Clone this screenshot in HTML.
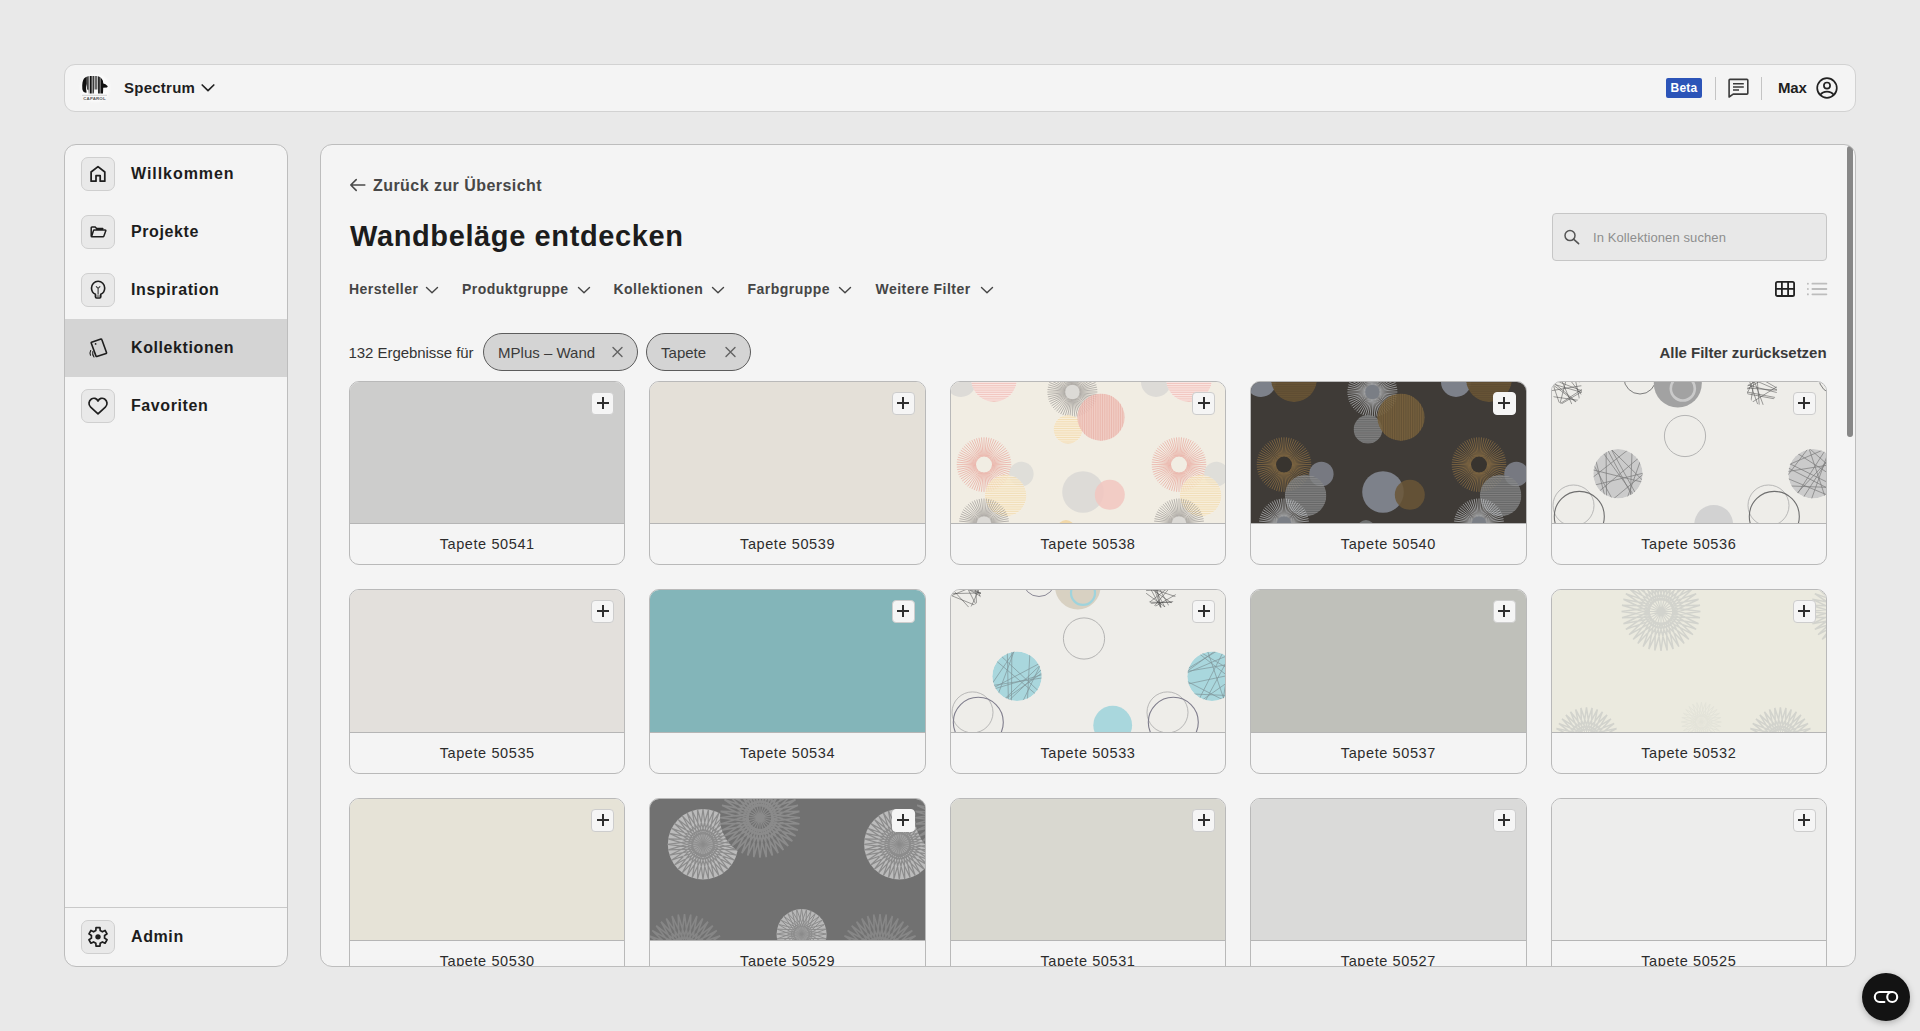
<!DOCTYPE html>
<html><head><meta charset="utf-8">
<style>
*{box-sizing:border-box;margin:0;padding:0}
html,body{width:1920px;height:1031px;overflow:hidden;background:#e9e9e9;font-family:"Liberation Sans",sans-serif;color:#1e1e1e}
.abs{position:absolute}
#hdr{position:absolute;left:64px;top:64px;width:1792px;height:48px;background:#f4f4f4;border:1.5px solid #d2d2d2;border-radius:11px}
#side{position:absolute;left:64px;top:144px;width:224px;height:823px;background:#f4f4f4;border:1px solid #bdbdbd;border-radius:12px;overflow:hidden}
#main{position:absolute;left:320px;top:144px;width:1536px;height:823px;background:#f4f4f4;border:1px solid #bdbdbd;border-radius:12px;overflow:hidden}
.nav{position:absolute;left:0;width:222px;height:58px}
.nav.act{background:#d4d4d4}
.ibox{position:absolute;left:16px;top:12px;width:34px;height:34px;border:1px solid #cfcfcf;background:#e9e9e9;border-radius:7px}
.nav.act .ibox{border-color:transparent;background:transparent}
.ibox svg{position:absolute;left:0;top:0}
.nlab{position:absolute;left:66px;top:19px;font-size:16px;font-weight:bold;color:#1c1c1c;white-space:nowrap;line-height:20px;letter-spacing:0.6px}
.card{position:absolute;width:276.4px;height:184.6px;border:1px solid #b9b9b9;border-radius:10px;overflow:hidden;background:#f4f4f4}
.card .img{position:absolute;left:0;top:0;right:0;height:142.5px;border-bottom:1px solid #b5b5b5;overflow:hidden}
.card .img svg{position:absolute;left:0;top:0}
.card .lab{position:absolute;left:0;right:0;top:153.4px;text-align:center;font-size:14.5px;color:#2c2c2c;line-height:18px;letter-spacing:0.6px}
.plus{position:absolute;right:10px;top:10px;width:23px;height:23px;background:#f5f5f5;border:1px solid #cdcdcd;border-radius:4px}
.plus:before{content:"";position:absolute;left:4.5px;top:9px;width:12px;height:2px;background:#2e2e2e}
.plus:after{content:"";position:absolute;left:9.5px;top:4px;width:2px;height:12px;background:#2e2e2e}
.flt{position:absolute;top:280px;font-size:14px;font-weight:bold;color:#454545;white-space:nowrap;line-height:18px}
.chip{position:absolute;top:333px;height:38px;border:1px solid #5a5a5a;border-radius:19px;background:#d4d4d4;font-size:15px;color:#3a3a3a;line-height:36px;white-space:nowrap}
</style></head><body>

<!-- HEADER -->
<div id="hdr"></div>
<!-- logo -->
<svg class="abs" style="left:78px;top:72px" width="34" height="32" viewBox="0 0 34 32">
 <defs><filter id="lb" x="-20%" y="-20%" width="140%" height="140%"><feGaussianBlur stdDeviation="1"/></filter>
 <clipPath id="eleph"><path d="M6 6.5 C7.5 4.8 9.5 4 12 3.9 L19 4 C21.5 4.3 23.5 5.8 24.8 8.5 L25.3 11.6 L27.5 12.2 L29.8 14.2 L29 15.6 L25.2 15.8 L25 21.6 L20 21.6 L19.8 17.6 L16.2 17.6 L15.8 21.6 L10.8 21.6 L10.4 17.8 L8.6 17.6 L8.6 20.8 C6.5 20.8 4.6 19.8 4.3 16.5 C4 12 4.6 8.5 6 6.5 Z"/></clipPath></defs>
 <ellipse cx="17" cy="16" rx="15" ry="14" fill="#fbfbfb" filter="url(#lb)"/>
 <g clip-path="url(#eleph)">
  <rect x="0" y="0" width="34" height="24" fill="#f6f6f6"/>
  <path d="M4 4 H8.8 V12 C8 15 7.6 17.5 8.8 19 V22 H4 Z" fill="#111"/>
  <rect x="9.1" y="0" width="1.6" height="24" fill="#333"/>
  <rect x="11.7" y="0" width="2" height="24" fill="#111"/>
  <rect x="14.5" y="0" width="1.4" height="24" fill="#2a2a2a"/>
  <rect x="16.5" y="0" width="2.9" height="24" fill="#6a6a6a"/>
  <rect x="20.1" y="0" width="1.7" height="24" fill="#151515"/>
  <rect x="22.4" y="0" width="12" height="24" fill="#111"/>
 </g>
 <rect x="4" y="22.9" width="25" height="0.5" fill="#aaa"/>
 <text x="16.5" y="27.5" font-size="4.4" font-weight="bold" text-anchor="middle" font-family="Liberation Sans" fill="#555" letter-spacing="0.15">CAPAROL</text>
</svg>
<div class="abs" style="left:124px;top:79px;font-size:15px;font-weight:bold;color:#1e1e1e;letter-spacing:0.25px;line-height:18px">Spectrum</div>
<svg class="abs" style="left:200px;top:82px" width="16" height="12" viewBox="0 0 16 12"><path d="M2.2 3 L8 8.6 L13.8 3" fill="none" stroke="#222" stroke-width="1.7" stroke-linecap="round" stroke-linejoin="round"/></svg>
<div class="abs" style="left:1666px;top:78px;width:36px;height:20px;background:#2c54b8;border-radius:2px;color:#fff;font-size:12px;font-weight:bold;line-height:20px;text-align:center;letter-spacing:0.2px">Beta</div>
<div class="abs" style="left:1715px;top:77px;width:1px;height:23px;background:#c4c4c4"></div>
<svg class="abs" style="left:1726px;top:77px" width="24" height="22" viewBox="0 0 24 22"><path d="M3.1 3.3 Q3.1 2.4 4 2.4 H20.9 Q21.8 2.4 21.8 3.3 V16.2 Q21.8 17.1 20.9 17.1 H7.2 L3.1 20 Z" fill="none" stroke="#3a3a3a" stroke-width="1.6" stroke-linejoin="round"/><path d="M7 6.8 H17.8 M7 10 H17.8 M7 13.1 H13" stroke="#3a3a3a" stroke-width="1.5"/></svg>
<div class="abs" style="left:1761px;top:77px;width:1px;height:23px;background:#c4c4c4"></div>
<div class="abs" style="left:1778px;top:79px;font-size:15px;font-weight:bold;color:#1e1e1e;line-height:18px;letter-spacing:-0.2px">Max</div>
<svg class="abs" style="left:1814px;top:75px" width="26" height="26" viewBox="0 0 26 26"><circle cx="13" cy="13" r="9.8" fill="none" stroke="#222" stroke-width="1.7"/><circle cx="13" cy="10.6" r="3.1" fill="none" stroke="#222" stroke-width="1.7"/><path d="M6.2 20 Q8.5 16.6 13 16.6 Q17.5 16.6 19.8 20" fill="none" stroke="#222" stroke-width="1.7"/></svg>


<!-- SIDEBAR -->
<div id="side">
<div class="nav" style="top:0px"><div class="ibox"><svg width="34" height="34" viewBox="0 0 34 34" style="left:-1px;top:-1px"><path d="M10.1 15 L17 9.6 L23.8 15 V24.2 H19.2 V18.7 H15 V24.2 H10.1 Z" fill="none" stroke="#1e1e1e" stroke-width="1.75" stroke-linejoin="round" stroke-linecap="round"/></svg></div><div class="nlab" style="letter-spacing:0.95px">Willkommen</div></div>
<div class="nav" style="top:58px"><div class="ibox"><svg width="34" height="34" viewBox="0 0 34 34" style="left:-1px;top:-1px"><path d="M21.8 13.6 H15.6 L14.2 12 H11 Q10.2 12 10.2 12.8 V21 Q10.2 21.8 11 21.8 H22 Q22.7 21.8 22.9 21.1 L24.8 15.8 Q25 14.9 24.1 14.9 H13.4 Q12.6 14.9 12.4 15.7 L10.6 21.6" fill="none" stroke="#1e1e1e" stroke-linejoin="round" stroke-linecap="round" stroke-width="1.5"/></svg></div><div class="nlab">Projekte</div></div>
<div class="nav" style="top:116px"><div class="ibox"><svg width="34" height="34" viewBox="0 0 34 34" style="left:-1px;top:-1px"><path d="M14.4 21.3 C11.6 20 10.5 17.5 10.5 15 C10.5 11.2 13.5 8.3 17.1 8.3 C20.7 8.3 23.7 11.2 23.7 15 C23.7 17.5 22.6 20 19.8 21.3 V23.8 Q19.8 25 18.6 25 H15.6 Q14.4 25 14.4 23.8 Z" fill="none" stroke="#1e1e1e" stroke-linejoin="round" stroke-linecap="round" stroke-width="1.6"/><path d="M15.3 13.6 L17.1 15.4 L18.9 13.6 M17.1 15.4 V20.9" fill="none" stroke="#333" stroke-width="1.1" stroke-linecap="round" stroke-linejoin="round"/><path d="M15.2 22.3 H19 M15.2 23.6 H19" stroke="#777" stroke-width="0.9"/></svg></div><div class="nlab">Inspiration</div></div>
<div class="nav act" style="top:174px"><div class="ibox"><svg width="34" height="34" viewBox="0 0 34 34" style="left:-1px;top:-1px"><path d="M10.6 11.3 L20 8.1 Q20.6 7.9 20.8 8.5 L25.5 21.6 Q25.7 22.2 25.1 22.4 L15.8 25.5 Q15.2 25.7 15 25.1 L10.2 12 Q10 11.5 10.6 11.3 Z" fill="none" stroke="#1e1e1e" stroke-linejoin="round" stroke-linecap="round" stroke-width="1.6"/><circle cx="14.6" cy="12.9" r="0.9" fill="#1e1e1e"/><path d="M9.7 19.6 Q8.5 21.8 9.5 24.2 M11.8 20.6 Q11.1 23.5 13 26" fill="none" stroke="#1e1e1e" stroke-width="1.1" stroke-linecap="round"/></svg></div><div class="nlab">Kollektionen</div></div>
<div class="nav" style="top:232px"><div class="ibox"><svg width="34" height="34" viewBox="0 0 34 34" style="left:-1px;top:-1px"><path d="M17 24.9 L9.65 18.2 C7.13 15.9 7.55 11.8 10.38 10 C12.8 8.5 15.53 9.3 17 12 C18.47 9.3 21.2 8.5 23.62 10 C26.45 11.8 26.87 15.9 24.35 18.2 Z" fill="none" stroke="#1e1e1e" stroke-linejoin="round" stroke-linecap="round" stroke-width="1.7"/></svg></div><div class="nlab">Favoriten</div></div>
<div class="abs" style="left:0;top:762px;width:222px;height:1px;background:#c9c9c9"></div>
<div class="nav" style="top:763px"><div class="ibox" style="top:12px"><svg width="34" height="34" viewBox="0 0 34 34" style="left:-1px;top:-1px"><path d="M14.82 10.52 L15.02 7.56 L18.98 7.56 L19.18 10.52 L21.40 11.79 L24.06 10.49 L26.04 13.91 L23.58 15.57 L23.58 18.13 L26.04 19.79 L24.06 23.21 L21.40 21.91 L19.18 23.18 L18.98 26.14 L15.02 26.14 L14.82 23.18 L12.60 21.91 L9.94 23.21 L7.96 19.79 L10.42 18.13 L10.42 15.57 L7.96 13.91 L9.94 10.49 L12.60 11.79 Z" fill="none" stroke="#1e1e1e" stroke-linejoin="round" stroke-linecap="round" stroke-width="1.7"/><circle cx="17" cy="16.85" r="2.7" fill="#1e1e1e"/></svg></div><div class="nlab">Admin</div></div>
</div>

<!-- MAIN -->
<div id="main">
<svg class="abs" style="left:28px;top:31.599999999999994px" width="18" height="16" viewBox="0 0 18 16"><path d="M15.8 8 H1.8 M7.2 2.6 L1.8 8 L7.2 13.4" fill="none" stroke="#4a4a4a" stroke-width="1.6" stroke-linecap="round" stroke-linejoin="round"/></svg>
<div class="abs" style="left:52.0px;top:30.76px;font-size:16px;line-height:20px;font-weight:bold;color:#474747;letter-spacing:0.45px;white-space:nowrap;">Zurück zur Übersicht</div>
<div class="abs" style="left:29.0px;top:72.95px;font-size:29px;line-height:36px;font-weight:bold;color:#1c1c1c;letter-spacing:0.62px;white-space:nowrap;">Wandbeläge entdecken</div>
<div class="abs" style="left:28.0px;top:134.95px;font-size:14px;line-height:18px;font-weight:bold;color:#454545;letter-spacing:0.48px;white-space:nowrap;">Hersteller</div>
<svg class="abs" style="left:104px;top:140.5px" width="14" height="9" viewBox="0 0 14 9"><path d="M1.5 1.6 L7 6.8 L12.5 1.6" fill="none" stroke="#454545" stroke-width="1.4" stroke-linecap="round" stroke-linejoin="round"/></svg>
<div class="abs" style="left:141.0px;top:134.95px;font-size:14px;line-height:18px;font-weight:bold;color:#454545;letter-spacing:0.48px;white-space:nowrap;">Produktgruppe</div>
<svg class="abs" style="left:256px;top:140.5px" width="14" height="9" viewBox="0 0 14 9"><path d="M1.5 1.6 L7 6.8 L12.5 1.6" fill="none" stroke="#454545" stroke-width="1.4" stroke-linecap="round" stroke-linejoin="round"/></svg>
<div class="abs" style="left:292.5px;top:134.95px;font-size:14px;line-height:18px;font-weight:bold;color:#454545;letter-spacing:0.48px;white-space:nowrap;">Kollektionen</div>
<svg class="abs" style="left:389.5px;top:140.5px" width="14" height="9" viewBox="0 0 14 9"><path d="M1.5 1.6 L7 6.8 L12.5 1.6" fill="none" stroke="#454545" stroke-width="1.4" stroke-linecap="round" stroke-linejoin="round"/></svg>
<div class="abs" style="left:426.5px;top:134.95px;font-size:14px;line-height:18px;font-weight:bold;color:#454545;letter-spacing:0.48px;white-space:nowrap;">Farbgruppe</div>
<svg class="abs" style="left:517px;top:140.5px" width="14" height="9" viewBox="0 0 14 9"><path d="M1.5 1.6 L7 6.8 L12.5 1.6" fill="none" stroke="#454545" stroke-width="1.4" stroke-linecap="round" stroke-linejoin="round"/></svg>
<div class="abs" style="left:554.5px;top:134.95px;font-size:14px;line-height:18px;font-weight:bold;color:#454545;letter-spacing:0.48px;white-space:nowrap;">Weitere Filter</div>
<svg class="abs" style="left:659px;top:140.5px" width="14" height="9" viewBox="0 0 14 9"><path d="M1.5 1.6 L7 6.8 L12.5 1.6" fill="none" stroke="#454545" stroke-width="1.4" stroke-linecap="round" stroke-linejoin="round"/></svg>
<div class="abs" style="left:27.5px;top:197.70px;font-size:15px;line-height:19px;font-weight:normal;color:#333;letter-spacing:-0.05px;white-space:nowrap;">132 Ergebnisse für</div>
<div class="abs" style="left:162px;top:188px;width:155px;height:38px;border:1px solid #5c5c5c;border-radius:19px;background:#d4d4d4"></div>
<div class="abs" style="left:177.1px;top:197.70px;font-size:15px;line-height:19px;font-weight:normal;color:#3a3a3a;letter-spacing:0px;white-space:nowrap;">MPlus – Wand</div>
<svg class="abs" style="left:290px;top:201px" width="13" height="12" viewBox="0 0 13 12"><path d="M2 1.5 L11 10.5 M11 1.5 L2 10.5" stroke="#626262" stroke-width="1.4" stroke-linecap="round"/></svg>
<div class="abs" style="left:325px;top:188px;width:105px;height:38px;border:1px solid #5c5c5c;border-radius:19px;background:#d4d4d4"></div>
<div class="abs" style="left:340.1px;top:197.70px;font-size:15px;line-height:19px;font-weight:normal;color:#3a3a3a;letter-spacing:0px;white-space:nowrap;">Tapete</div>
<svg class="abs" style="left:402.6px;top:201px" width="13" height="12" viewBox="0 0 13 12"><path d="M2 1.5 L11 10.5 M11 1.5 L2 10.5" stroke="#626262" stroke-width="1.4" stroke-linecap="round"/></svg>
<div class="abs" style="left:1338.5px;top:198.30px;font-size:15px;line-height:19px;font-weight:bold;color:#3a3a3a;letter-spacing:-0.02px;white-space:nowrap;">Alle Filter zurücksetzen</div>
<div class="abs" style="left:1231px;top:68px;width:275px;height:48px;border:1px solid #c6c6c6;border-radius:4px;background:#e8e8e8"></div>
<svg class="abs" style="left:1242px;top:84px" width="18" height="16" viewBox="0 0 18 16"><circle cx="7" cy="6.6" r="5" fill="none" stroke="#555" stroke-width="1.5"/><path d="M10.8 10.3 L15.6 14.7" stroke="#555" stroke-width="1.6" stroke-linecap="round"/></svg>
<div class="abs" style="left:1272.0px;top:84.80px;font-size:13px;line-height:16px;font-weight:normal;color:#8e8e8e;letter-spacing:0.1px;white-space:nowrap;">In Kollektionen suchen</div>
<svg class="abs" style="left:1453px;top:135px" width="22" height="18" viewBox="0 0 22 18"><rect x="1.9" y="1.8" width="18.2" height="14.2" rx="1.6" fill="none" stroke="#222" stroke-width="1.8"/><path d="M7.9 1.8 V16 M14.1 1.8 V16 M1.9 8.9 H20.1" stroke="#222" stroke-width="1.8"/></svg>
<svg class="abs" style="left:1485px;top:136px" width="22" height="16" viewBox="0 0 22 16"><path d="M1.9 2.7 V2.8 M1.9 8 V8.1 M1.9 13.3 V13.4" stroke="#bdbdbd" stroke-width="1.9" stroke-linecap="round"/><path d="M6.4 2.7 H20.4 M6.4 8 H20.4 M6.4 13.3 H20.4" stroke="#bdbdbd" stroke-width="1.8" stroke-linecap="round"/></svg>
<div class="abs" style="left:1526px;top:1px;width:6px;height:291px;border-radius:3px;background:#878787"></div>
<div class="card" style="left:28.0px;top:235.6px"><div class="img"><svg width="278" height="142" viewBox="0 0 278 142"><rect width="278" height="142" fill="#cdcdcc"/></svg></div><div class="plus"></div><div class="lab">Tapete 50541</div></div>
<div class="card" style="left:328.4px;top:235.6px"><div class="img"><svg width="278" height="142" viewBox="0 0 278 142"><rect width="278" height="142" fill="#e4e0d8"/></svg></div><div class="plus"></div><div class="lab">Tapete 50539</div></div>
<div class="card" style="left:628.8px;top:235.6px"><div class="img"><svg width="278" height="142" viewBox="0 0 278 142"><rect width="278" height="142" fill="#f1ede3"/><circle cx="10" cy="0" r="15" fill="#dddbd7"/><clipPath id="c347712782"><circle cx="43" cy="-3" r="23"/></clipPath><g clip-path="url(#c347712782)" opacity="0.95"><circle cx="43" cy="-3" r="23" fill="#f2c6bf"/><path d="M20 -26.00H66M20 -23.80H66M20 -21.60H66M20 -19.40H66M20 -17.20H66M20 -15.00H66M20 -12.80H66M20 -10.60H66M20 -8.40H66M20 -6.20H66M20 -4.00H66M20 -1.80H66M20 0.40H66M20 2.60H66M20 4.80H66M20 7.00H66M20 9.20H66M20 11.40H66M20 13.60H66M20 15.80H66M20 18.00H66" stroke="#fff" stroke-width="0.6"/></g><path d="M121.40 10.00L146.40 10.00M121.40 10.00L146.28 12.45M121.40 10.00L145.92 14.88M121.40 10.00L145.32 17.26M121.40 10.00L144.50 19.57M121.40 10.00L143.45 21.78M121.40 10.00L142.19 23.89M121.40 10.00L140.73 25.86M121.40 10.00L139.08 27.68M121.40 10.00L137.26 29.33M121.40 10.00L135.29 30.79M121.40 10.00L133.18 32.05M121.40 10.00L130.97 33.10M121.40 10.00L128.66 33.92M121.40 10.00L126.28 34.52M121.40 10.00L123.85 34.88M121.40 10.00L121.40 35.00M121.40 10.00L118.95 34.88M121.40 10.00L116.52 34.52M121.40 10.00L114.14 33.92M121.40 10.00L111.83 33.10M121.40 10.00L109.62 32.05M121.40 10.00L107.51 30.79M121.40 10.00L105.54 29.33M121.40 10.00L103.72 27.68M121.40 10.00L102.07 25.86M121.40 10.00L100.61 23.89M121.40 10.00L99.35 21.78M121.40 10.00L98.30 19.57M121.40 10.00L97.48 17.26M121.40 10.00L96.88 14.88M121.40 10.00L96.52 12.45M121.40 10.00L96.40 10.00M121.40 10.00L96.52 7.55M121.40 10.00L96.88 5.12M121.40 10.00L97.48 2.74M121.40 10.00L98.30 0.43M121.40 10.00L99.35 -1.78M121.40 10.00L100.61 -3.89M121.40 10.00L102.07 -5.86M121.40 10.00L103.72 -7.68M121.40 10.00L105.54 -9.33M121.40 10.00L107.51 -10.79M121.40 10.00L109.62 -12.05M121.40 10.00L111.83 -13.10M121.40 10.00L114.14 -13.92M121.40 10.00L116.52 -14.52M121.40 10.00L118.95 -14.88M121.40 10.00L121.40 -15.00M121.40 10.00L123.85 -14.88M121.40 10.00L126.28 -14.52M121.40 10.00L128.66 -13.92M121.40 10.00L130.97 -13.10M121.40 10.00L133.18 -12.05M121.40 10.00L135.29 -10.79M121.40 10.00L137.26 -9.33M121.40 10.00L139.08 -7.68M121.40 10.00L140.73 -5.86M121.40 10.00L142.19 -3.89M121.40 10.00L143.45 -1.78M121.40 10.00L144.50 0.43M121.40 10.00L145.32 2.74M121.40 10.00L145.92 5.12M121.40 10.00L146.28 7.55" stroke="#8d8a88" stroke-width="0.6" opacity="1"/><circle cx="121.4" cy="10" r="7.3" fill="#dcdad6"/><clipPath id="c161973069"><circle cx="117" cy="47.4" r="14.4"/></clipPath><g clip-path="url(#c161973069)" opacity="0.9"><circle cx="117" cy="47.4" r="14.4" fill="#f2d8a8"/><path d="M102.6 33.00H131.4M102.6 34.80H131.4M102.6 36.60H131.4M102.6 38.40H131.4M102.6 40.20H131.4M102.6 42.00H131.4M102.6 43.80H131.4M102.6 45.60H131.4M102.6 47.40H131.4M102.6 49.20H131.4M102.6 51.00H131.4M102.6 52.80H131.4M102.6 54.60H131.4M102.6 56.40H131.4M102.6 58.20H131.4M102.6 60.00H131.4" stroke="#fff" stroke-width="0.6"/></g><clipPath id="c423938499"><circle cx="150" cy="35.2" r="23.7"/></clipPath><g clip-path="url(#c423938499)" opacity="0.85"><circle cx="150" cy="35.2" r="23.7" fill="#f3cdc6"/><path d="M126.30 11.500000000000004V58.900000000000006M128.10 11.500000000000004V58.900000000000006M129.90 11.500000000000004V58.900000000000006M131.70 11.500000000000004V58.900000000000006M133.50 11.500000000000004V58.900000000000006M135.30 11.500000000000004V58.900000000000006M137.10 11.500000000000004V58.900000000000006M138.90 11.500000000000004V58.900000000000006M140.70 11.500000000000004V58.900000000000006M142.50 11.500000000000004V58.900000000000006M144.30 11.500000000000004V58.900000000000006M146.10 11.500000000000004V58.900000000000006M147.90 11.500000000000004V58.900000000000006M149.70 11.500000000000004V58.900000000000006M151.50 11.500000000000004V58.900000000000006M153.30 11.500000000000004V58.900000000000006M155.10 11.500000000000004V58.900000000000006M156.90 11.500000000000004V58.900000000000006M158.70 11.500000000000004V58.900000000000006M160.50 11.500000000000004V58.900000000000006M162.30 11.500000000000004V58.900000000000006M164.10 11.500000000000004V58.900000000000006M165.90 11.500000000000004V58.900000000000006M167.70 11.500000000000004V58.900000000000006M169.50 11.500000000000004V58.900000000000006M171.30 11.500000000000004V58.900000000000006M173.10 11.500000000000004V58.900000000000006" stroke="#e39a90" stroke-width="0.6"/></g><path d="M33.00 82.60L60.30 82.60M33.00 82.60L60.18 85.12M33.00 82.60L59.84 87.62M33.00 82.60L59.26 90.07M33.00 82.60L58.46 92.46M33.00 82.60L57.44 94.77M33.00 82.60L56.21 96.97M33.00 82.60L54.79 99.05M33.00 82.60L53.17 100.99M33.00 82.60L51.39 102.77M33.00 82.60L49.45 104.39M33.00 82.60L47.37 105.81M33.00 82.60L45.17 107.04M33.00 82.60L42.86 108.06M33.00 82.60L40.47 108.86M33.00 82.60L38.02 109.44M33.00 82.60L35.52 109.78M33.00 82.60L33.00 109.90M33.00 82.60L30.48 109.78M33.00 82.60L27.98 109.44M33.00 82.60L25.53 108.86M33.00 82.60L23.14 108.06M33.00 82.60L20.83 107.04M33.00 82.60L18.63 105.81M33.00 82.60L16.55 104.39M33.00 82.60L14.61 102.77M33.00 82.60L12.83 100.99M33.00 82.60L11.21 99.05M33.00 82.60L9.79 96.97M33.00 82.60L8.56 94.77M33.00 82.60L7.54 92.46M33.00 82.60L6.74 90.07M33.00 82.60L6.16 87.62M33.00 82.60L5.82 85.12M33.00 82.60L5.70 82.60M33.00 82.60L5.82 80.08M33.00 82.60L6.16 77.58M33.00 82.60L6.74 75.13M33.00 82.60L7.54 72.74M33.00 82.60L8.56 70.43M33.00 82.60L9.79 68.23M33.00 82.60L11.21 66.15M33.00 82.60L12.83 64.21M33.00 82.60L14.61 62.43M33.00 82.60L16.55 60.81M33.00 82.60L18.63 59.39M33.00 82.60L20.83 58.16M33.00 82.60L23.14 57.14M33.00 82.60L25.53 56.34M33.00 82.60L27.98 55.76M33.00 82.60L30.48 55.42M33.00 82.60L33.00 55.30M33.00 82.60L35.52 55.42M33.00 82.60L38.02 55.76M33.00 82.60L40.47 56.34M33.00 82.60L42.86 57.14M33.00 82.60L45.17 58.16M33.00 82.60L47.37 59.39M33.00 82.60L49.45 60.81M33.00 82.60L51.39 62.43M33.00 82.60L53.17 64.21M33.00 82.60L54.79 66.15M33.00 82.60L56.21 68.23M33.00 82.60L57.44 70.43M33.00 82.60L58.46 72.74M33.00 82.60L59.26 75.13M33.00 82.60L59.84 77.58M33.00 82.60L60.18 80.08" stroke="#e79a90" stroke-width="0.6" opacity="1"/><circle cx="33" cy="82.6" r="8" fill="#f1ede3"/><circle cx="70.4" cy="92" r="12.2" fill="#dddbd7" opacity="0.9"/><clipPath id="c698935572"><circle cx="54.6" cy="113.5" r="20.8"/></clipPath><g clip-path="url(#c698935572)" opacity="0.8"><circle cx="54.6" cy="113.5" r="20.8" fill="#f2d8a8"/><path d="M33.8 92.70H75.4M33.8 94.50H75.4M33.8 96.30H75.4M33.8 98.10H75.4M33.8 99.90H75.4M33.8 101.70H75.4M33.8 103.50H75.4M33.8 105.30H75.4M33.8 107.10H75.4M33.8 108.90H75.4M33.8 110.70H75.4M33.8 112.50H75.4M33.8 114.30H75.4M33.8 116.10H75.4M33.8 117.90H75.4M33.8 119.70H75.4M33.8 121.50H75.4M33.8 123.30H75.4M33.8 125.10H75.4M33.8 126.90H75.4M33.8 128.70H75.4M33.8 130.50H75.4M33.8 132.30H75.4M33.8 134.10H75.4" stroke="#fff" stroke-width="0.6"/></g><path d="M33.00 141.50L58.00 141.50M33.00 141.50L57.88 143.95M33.00 141.50L57.52 146.38M33.00 141.50L56.92 148.76M33.00 141.50L56.10 151.07M33.00 141.50L55.05 153.28M33.00 141.50L53.79 155.39M33.00 141.50L52.33 157.36M33.00 141.50L50.68 159.18M33.00 141.50L48.86 160.83M33.00 141.50L46.89 162.29M33.00 141.50L44.78 163.55M33.00 141.50L42.57 164.60M33.00 141.50L40.26 165.42M33.00 141.50L37.88 166.02M33.00 141.50L35.45 166.38M33.00 141.50L33.00 166.50M33.00 141.50L30.55 166.38M33.00 141.50L28.12 166.02M33.00 141.50L25.74 165.42M33.00 141.50L23.43 164.60M33.00 141.50L21.22 163.55M33.00 141.50L19.11 162.29M33.00 141.50L17.14 160.83M33.00 141.50L15.32 159.18M33.00 141.50L13.67 157.36M33.00 141.50L12.21 155.39M33.00 141.50L10.95 153.28M33.00 141.50L9.90 151.07M33.00 141.50L9.08 148.76M33.00 141.50L8.48 146.38M33.00 141.50L8.12 143.95M33.00 141.50L8.00 141.50M33.00 141.50L8.12 139.05M33.00 141.50L8.48 136.62M33.00 141.50L9.08 134.24M33.00 141.50L9.90 131.93M33.00 141.50L10.95 129.72M33.00 141.50L12.21 127.61M33.00 141.50L13.67 125.64M33.00 141.50L15.32 123.82M33.00 141.50L17.14 122.17M33.00 141.50L19.11 120.71M33.00 141.50L21.22 119.45M33.00 141.50L23.43 118.40M33.00 141.50L25.74 117.58M33.00 141.50L28.12 116.98M33.00 141.50L30.55 116.62M33.00 141.50L33.00 116.50M33.00 141.50L35.45 116.62M33.00 141.50L37.88 116.98M33.00 141.50L40.26 117.58M33.00 141.50L42.57 118.40M33.00 141.50L44.78 119.45M33.00 141.50L46.89 120.71M33.00 141.50L48.86 122.17M33.00 141.50L50.68 123.82M33.00 141.50L52.33 125.64M33.00 141.50L53.79 127.61M33.00 141.50L55.05 129.72M33.00 141.50L56.10 131.93M33.00 141.50L56.92 134.24M33.00 141.50L57.52 136.62M33.00 141.50L57.88 139.05" stroke="#8d8a88" stroke-width="0.6" opacity="1"/><circle cx="33" cy="141.5" r="7.3" fill="#dcdad6"/><circle cx="132" cy="110" r="20.8" fill="#dddbd7"/><circle cx="158.8" cy="112.8" r="15" fill="#f2c6bf" opacity="0.85"/><circle cx="115" cy="146.6" r="8.6" fill="#f2d8a8"/><circle cx="205" cy="0" r="15" fill="#dddbd7"/><clipPath id="c51847156"><circle cx="238" cy="-3" r="23"/></clipPath><g clip-path="url(#c51847156)" opacity="0.95"><circle cx="238" cy="-3" r="23" fill="#f2c6bf"/><path d="M215 -26.00H261M215 -23.80H261M215 -21.60H261M215 -19.40H261M215 -17.20H261M215 -15.00H261M215 -12.80H261M215 -10.60H261M215 -8.40H261M215 -6.20H261M215 -4.00H261M215 -1.80H261M215 0.40H261M215 2.60H261M215 4.80H261M215 7.00H261M215 9.20H261M215 11.40H261M215 13.60H261M215 15.80H261M215 18.00H261" stroke="#fff" stroke-width="0.6"/></g><path d="M316.40 10.00L341.40 10.00M316.40 10.00L341.28 12.45M316.40 10.00L340.92 14.88M316.40 10.00L340.32 17.26M316.40 10.00L339.50 19.57M316.40 10.00L338.45 21.78M316.40 10.00L337.19 23.89M316.40 10.00L335.73 25.86M316.40 10.00L334.08 27.68M316.40 10.00L332.26 29.33M316.40 10.00L330.29 30.79M316.40 10.00L328.18 32.05M316.40 10.00L325.97 33.10M316.40 10.00L323.66 33.92M316.40 10.00L321.28 34.52M316.40 10.00L318.85 34.88M316.40 10.00L316.40 35.00M316.40 10.00L313.95 34.88M316.40 10.00L311.52 34.52M316.40 10.00L309.14 33.92M316.40 10.00L306.83 33.10M316.40 10.00L304.62 32.05M316.40 10.00L302.51 30.79M316.40 10.00L300.54 29.33M316.40 10.00L298.72 27.68M316.40 10.00L297.07 25.86M316.40 10.00L295.61 23.89M316.40 10.00L294.35 21.78M316.40 10.00L293.30 19.57M316.40 10.00L292.48 17.26M316.40 10.00L291.88 14.88M316.40 10.00L291.52 12.45M316.40 10.00L291.40 10.00M316.40 10.00L291.52 7.55M316.40 10.00L291.88 5.12M316.40 10.00L292.48 2.74M316.40 10.00L293.30 0.43M316.40 10.00L294.35 -1.78M316.40 10.00L295.61 -3.89M316.40 10.00L297.07 -5.86M316.40 10.00L298.72 -7.68M316.40 10.00L300.54 -9.33M316.40 10.00L302.51 -10.79M316.40 10.00L304.62 -12.05M316.40 10.00L306.83 -13.10M316.40 10.00L309.14 -13.92M316.40 10.00L311.52 -14.52M316.40 10.00L313.95 -14.88M316.40 10.00L316.40 -15.00M316.40 10.00L318.85 -14.88M316.40 10.00L321.28 -14.52M316.40 10.00L323.66 -13.92M316.40 10.00L325.97 -13.10M316.40 10.00L328.18 -12.05M316.40 10.00L330.29 -10.79M316.40 10.00L332.26 -9.33M316.40 10.00L334.08 -7.68M316.40 10.00L335.73 -5.86M316.40 10.00L337.19 -3.89M316.40 10.00L338.45 -1.78M316.40 10.00L339.50 0.43M316.40 10.00L340.32 2.74M316.40 10.00L340.92 5.12M316.40 10.00L341.28 7.55" stroke="#8d8a88" stroke-width="0.6" opacity="1"/><circle cx="316.4" cy="10" r="7.3" fill="#dcdad6"/><clipPath id="c77777868"><circle cx="312" cy="47.4" r="14.4"/></clipPath><g clip-path="url(#c77777868)" opacity="0.9"><circle cx="312" cy="47.4" r="14.4" fill="#f2d8a8"/><path d="M297.6 33.00H326.4M297.6 34.80H326.4M297.6 36.60H326.4M297.6 38.40H326.4M297.6 40.20H326.4M297.6 42.00H326.4M297.6 43.80H326.4M297.6 45.60H326.4M297.6 47.40H326.4M297.6 49.20H326.4M297.6 51.00H326.4M297.6 52.80H326.4M297.6 54.60H326.4M297.6 56.40H326.4M297.6 58.20H326.4M297.6 60.00H326.4" stroke="#fff" stroke-width="0.6"/></g><clipPath id="c881836553"><circle cx="345" cy="35.2" r="23.7"/></clipPath><g clip-path="url(#c881836553)" opacity="0.85"><circle cx="345" cy="35.2" r="23.7" fill="#f3cdc6"/><path d="M321.30 11.500000000000004V58.900000000000006M323.10 11.500000000000004V58.900000000000006M324.90 11.500000000000004V58.900000000000006M326.70 11.500000000000004V58.900000000000006M328.50 11.500000000000004V58.900000000000006M330.30 11.500000000000004V58.900000000000006M332.10 11.500000000000004V58.900000000000006M333.90 11.500000000000004V58.900000000000006M335.70 11.500000000000004V58.900000000000006M337.50 11.500000000000004V58.900000000000006M339.30 11.500000000000004V58.900000000000006M341.10 11.500000000000004V58.900000000000006M342.90 11.500000000000004V58.900000000000006M344.70 11.500000000000004V58.900000000000006M346.50 11.500000000000004V58.900000000000006M348.30 11.500000000000004V58.900000000000006M350.10 11.500000000000004V58.900000000000006M351.90 11.500000000000004V58.900000000000006M353.70 11.500000000000004V58.900000000000006M355.50 11.500000000000004V58.900000000000006M357.30 11.500000000000004V58.900000000000006M359.10 11.500000000000004V58.900000000000006M360.90 11.500000000000004V58.900000000000006M362.70 11.500000000000004V58.900000000000006M364.50 11.500000000000004V58.900000000000006M366.30 11.500000000000004V58.900000000000006M368.10 11.500000000000004V58.900000000000006" stroke="#e39a90" stroke-width="0.6"/></g><path d="M228.00 82.60L255.30 82.60M228.00 82.60L255.18 85.12M228.00 82.60L254.84 87.62M228.00 82.60L254.26 90.07M228.00 82.60L253.46 92.46M228.00 82.60L252.44 94.77M228.00 82.60L251.21 96.97M228.00 82.60L249.79 99.05M228.00 82.60L248.17 100.99M228.00 82.60L246.39 102.77M228.00 82.60L244.45 104.39M228.00 82.60L242.37 105.81M228.00 82.60L240.17 107.04M228.00 82.60L237.86 108.06M228.00 82.60L235.47 108.86M228.00 82.60L233.02 109.44M228.00 82.60L230.52 109.78M228.00 82.60L228.00 109.90M228.00 82.60L225.48 109.78M228.00 82.60L222.98 109.44M228.00 82.60L220.53 108.86M228.00 82.60L218.14 108.06M228.00 82.60L215.83 107.04M228.00 82.60L213.63 105.81M228.00 82.60L211.55 104.39M228.00 82.60L209.61 102.77M228.00 82.60L207.83 100.99M228.00 82.60L206.21 99.05M228.00 82.60L204.79 96.97M228.00 82.60L203.56 94.77M228.00 82.60L202.54 92.46M228.00 82.60L201.74 90.07M228.00 82.60L201.16 87.62M228.00 82.60L200.82 85.12M228.00 82.60L200.70 82.60M228.00 82.60L200.82 80.08M228.00 82.60L201.16 77.58M228.00 82.60L201.74 75.13M228.00 82.60L202.54 72.74M228.00 82.60L203.56 70.43M228.00 82.60L204.79 68.23M228.00 82.60L206.21 66.15M228.00 82.60L207.83 64.21M228.00 82.60L209.61 62.43M228.00 82.60L211.55 60.81M228.00 82.60L213.63 59.39M228.00 82.60L215.83 58.16M228.00 82.60L218.14 57.14M228.00 82.60L220.53 56.34M228.00 82.60L222.98 55.76M228.00 82.60L225.48 55.42M228.00 82.60L228.00 55.30M228.00 82.60L230.52 55.42M228.00 82.60L233.02 55.76M228.00 82.60L235.47 56.34M228.00 82.60L237.86 57.14M228.00 82.60L240.17 58.16M228.00 82.60L242.37 59.39M228.00 82.60L244.45 60.81M228.00 82.60L246.39 62.43M228.00 82.60L248.17 64.21M228.00 82.60L249.79 66.15M228.00 82.60L251.21 68.23M228.00 82.60L252.44 70.43M228.00 82.60L253.46 72.74M228.00 82.60L254.26 75.13M228.00 82.60L254.84 77.58M228.00 82.60L255.18 80.08" stroke="#e79a90" stroke-width="0.6" opacity="1"/><circle cx="228" cy="82.6" r="8" fill="#f1ede3"/><circle cx="265.4" cy="92" r="12.2" fill="#dddbd7" opacity="0.9"/><clipPath id="c575398922"><circle cx="249.6" cy="113.5" r="20.8"/></clipPath><g clip-path="url(#c575398922)" opacity="0.8"><circle cx="249.6" cy="113.5" r="20.8" fill="#f2d8a8"/><path d="M228.79999999999998 92.70H270.4M228.79999999999998 94.50H270.4M228.79999999999998 96.30H270.4M228.79999999999998 98.10H270.4M228.79999999999998 99.90H270.4M228.79999999999998 101.70H270.4M228.79999999999998 103.50H270.4M228.79999999999998 105.30H270.4M228.79999999999998 107.10H270.4M228.79999999999998 108.90H270.4M228.79999999999998 110.70H270.4M228.79999999999998 112.50H270.4M228.79999999999998 114.30H270.4M228.79999999999998 116.10H270.4M228.79999999999998 117.90H270.4M228.79999999999998 119.70H270.4M228.79999999999998 121.50H270.4M228.79999999999998 123.30H270.4M228.79999999999998 125.10H270.4M228.79999999999998 126.90H270.4M228.79999999999998 128.70H270.4M228.79999999999998 130.50H270.4M228.79999999999998 132.30H270.4M228.79999999999998 134.10H270.4" stroke="#fff" stroke-width="0.6"/></g><path d="M228.00 141.50L253.00 141.50M228.00 141.50L252.88 143.95M228.00 141.50L252.52 146.38M228.00 141.50L251.92 148.76M228.00 141.50L251.10 151.07M228.00 141.50L250.05 153.28M228.00 141.50L248.79 155.39M228.00 141.50L247.33 157.36M228.00 141.50L245.68 159.18M228.00 141.50L243.86 160.83M228.00 141.50L241.89 162.29M228.00 141.50L239.78 163.55M228.00 141.50L237.57 164.60M228.00 141.50L235.26 165.42M228.00 141.50L232.88 166.02M228.00 141.50L230.45 166.38M228.00 141.50L228.00 166.50M228.00 141.50L225.55 166.38M228.00 141.50L223.12 166.02M228.00 141.50L220.74 165.42M228.00 141.50L218.43 164.60M228.00 141.50L216.22 163.55M228.00 141.50L214.11 162.29M228.00 141.50L212.14 160.83M228.00 141.50L210.32 159.18M228.00 141.50L208.67 157.36M228.00 141.50L207.21 155.39M228.00 141.50L205.95 153.28M228.00 141.50L204.90 151.07M228.00 141.50L204.08 148.76M228.00 141.50L203.48 146.38M228.00 141.50L203.12 143.95M228.00 141.50L203.00 141.50M228.00 141.50L203.12 139.05M228.00 141.50L203.48 136.62M228.00 141.50L204.08 134.24M228.00 141.50L204.90 131.93M228.00 141.50L205.95 129.72M228.00 141.50L207.21 127.61M228.00 141.50L208.67 125.64M228.00 141.50L210.32 123.82M228.00 141.50L212.14 122.17M228.00 141.50L214.11 120.71M228.00 141.50L216.22 119.45M228.00 141.50L218.43 118.40M228.00 141.50L220.74 117.58M228.00 141.50L223.12 116.98M228.00 141.50L225.55 116.62M228.00 141.50L228.00 116.50M228.00 141.50L230.45 116.62M228.00 141.50L232.88 116.98M228.00 141.50L235.26 117.58M228.00 141.50L237.57 118.40M228.00 141.50L239.78 119.45M228.00 141.50L241.89 120.71M228.00 141.50L243.86 122.17M228.00 141.50L245.68 123.82M228.00 141.50L247.33 125.64M228.00 141.50L248.79 127.61M228.00 141.50L250.05 129.72M228.00 141.50L251.10 131.93M228.00 141.50L251.92 134.24M228.00 141.50L252.52 136.62M228.00 141.50L252.88 139.05" stroke="#8d8a88" stroke-width="0.6" opacity="1"/><circle cx="228" cy="141.5" r="7.3" fill="#dcdad6"/><circle cx="327" cy="110" r="20.8" fill="#dddbd7"/><circle cx="353.8" cy="112.8" r="15" fill="#f2c6bf" opacity="0.85"/><circle cx="310" cy="146.6" r="8.6" fill="#f2d8a8"/></svg></div><div class="plus"></div><div class="lab">Tapete 50538</div></div>
<div class="card" style="left:929.2px;top:235.6px"><div class="img"><svg width="278" height="142" viewBox="0 0 278 142"><rect width="278" height="142" fill="#3f3b37"/><circle cx="10" cy="0" r="15" fill="#7d818a"/><clipPath id="c101071364"><circle cx="43" cy="-3" r="23"/></clipPath><g clip-path="url(#c101071364)" opacity="0.95"><circle cx="43" cy="-3" r="23" fill="#6a5636"/><path d="M20 -26.00H66M20 -23.80H66M20 -21.60H66M20 -19.40H66M20 -17.20H66M20 -15.00H66M20 -12.80H66M20 -10.60H66M20 -8.40H66M20 -6.20H66M20 -4.00H66M20 -1.80H66M20 0.40H66M20 2.60H66M20 4.80H66M20 7.00H66M20 9.20H66M20 11.40H66M20 13.60H66M20 15.80H66M20 18.00H66" stroke="#5a4a30" stroke-width="0.6"/></g><path d="M121.40 10.00L146.40 10.00M121.40 10.00L146.28 12.45M121.40 10.00L145.92 14.88M121.40 10.00L145.32 17.26M121.40 10.00L144.50 19.57M121.40 10.00L143.45 21.78M121.40 10.00L142.19 23.89M121.40 10.00L140.73 25.86M121.40 10.00L139.08 27.68M121.40 10.00L137.26 29.33M121.40 10.00L135.29 30.79M121.40 10.00L133.18 32.05M121.40 10.00L130.97 33.10M121.40 10.00L128.66 33.92M121.40 10.00L126.28 34.52M121.40 10.00L123.85 34.88M121.40 10.00L121.40 35.00M121.40 10.00L118.95 34.88M121.40 10.00L116.52 34.52M121.40 10.00L114.14 33.92M121.40 10.00L111.83 33.10M121.40 10.00L109.62 32.05M121.40 10.00L107.51 30.79M121.40 10.00L105.54 29.33M121.40 10.00L103.72 27.68M121.40 10.00L102.07 25.86M121.40 10.00L100.61 23.89M121.40 10.00L99.35 21.78M121.40 10.00L98.30 19.57M121.40 10.00L97.48 17.26M121.40 10.00L96.88 14.88M121.40 10.00L96.52 12.45M121.40 10.00L96.40 10.00M121.40 10.00L96.52 7.55M121.40 10.00L96.88 5.12M121.40 10.00L97.48 2.74M121.40 10.00L98.30 0.43M121.40 10.00L99.35 -1.78M121.40 10.00L100.61 -3.89M121.40 10.00L102.07 -5.86M121.40 10.00L103.72 -7.68M121.40 10.00L105.54 -9.33M121.40 10.00L107.51 -10.79M121.40 10.00L109.62 -12.05M121.40 10.00L111.83 -13.10M121.40 10.00L114.14 -13.92M121.40 10.00L116.52 -14.52M121.40 10.00L118.95 -14.88M121.40 10.00L121.40 -15.00M121.40 10.00L123.85 -14.88M121.40 10.00L126.28 -14.52M121.40 10.00L128.66 -13.92M121.40 10.00L130.97 -13.10M121.40 10.00L133.18 -12.05M121.40 10.00L135.29 -10.79M121.40 10.00L137.26 -9.33M121.40 10.00L139.08 -7.68M121.40 10.00L140.73 -5.86M121.40 10.00L142.19 -3.89M121.40 10.00L143.45 -1.78M121.40 10.00L144.50 0.43M121.40 10.00L145.32 2.74M121.40 10.00L145.92 5.12M121.40 10.00L146.28 7.55" stroke="#d3d6db" stroke-width="0.6" opacity="1"/><circle cx="121.4" cy="10" r="7.3" fill="#7a7e85"/><clipPath id="c392655486"><circle cx="117" cy="47.4" r="14.4"/></clipPath><g clip-path="url(#c392655486)" opacity="0.9"><circle cx="117" cy="47.4" r="14.4" fill="#6e7070"/><path d="M102.6 33.00H131.4M102.6 34.80H131.4M102.6 36.60H131.4M102.6 38.40H131.4M102.6 40.20H131.4M102.6 42.00H131.4M102.6 43.80H131.4M102.6 45.60H131.4M102.6 47.40H131.4M102.6 49.20H131.4M102.6 51.00H131.4M102.6 52.80H131.4M102.6 54.60H131.4M102.6 56.40H131.4M102.6 58.20H131.4M102.6 60.00H131.4" stroke="#999" stroke-width="0.6"/></g><clipPath id="c625763863"><circle cx="150" cy="35.2" r="23.7"/></clipPath><g clip-path="url(#c625763863)" opacity="0.85"><circle cx="150" cy="35.2" r="23.7" fill="#6a5636"/><path d="M126.30 11.500000000000004V58.900000000000006M128.10 11.500000000000004V58.900000000000006M129.90 11.500000000000004V58.900000000000006M131.70 11.500000000000004V58.900000000000006M133.50 11.500000000000004V58.900000000000006M135.30 11.500000000000004V58.900000000000006M137.10 11.500000000000004V58.900000000000006M138.90 11.500000000000004V58.900000000000006M140.70 11.500000000000004V58.900000000000006M142.50 11.500000000000004V58.900000000000006M144.30 11.500000000000004V58.900000000000006M146.10 11.500000000000004V58.900000000000006M147.90 11.500000000000004V58.900000000000006M149.70 11.500000000000004V58.900000000000006M151.50 11.500000000000004V58.900000000000006M153.30 11.500000000000004V58.900000000000006M155.10 11.500000000000004V58.900000000000006M156.90 11.500000000000004V58.900000000000006M158.70 11.500000000000004V58.900000000000006M160.50 11.500000000000004V58.900000000000006M162.30 11.500000000000004V58.900000000000006M164.10 11.500000000000004V58.900000000000006M165.90 11.500000000000004V58.900000000000006M167.70 11.500000000000004V58.900000000000006M169.50 11.500000000000004V58.900000000000006M171.30 11.500000000000004V58.900000000000006M173.10 11.500000000000004V58.900000000000006" stroke="#8f7446" stroke-width="0.6"/></g><path d="M33.00 82.60L60.30 82.60M33.00 82.60L60.18 85.12M33.00 82.60L59.84 87.62M33.00 82.60L59.26 90.07M33.00 82.60L58.46 92.46M33.00 82.60L57.44 94.77M33.00 82.60L56.21 96.97M33.00 82.60L54.79 99.05M33.00 82.60L53.17 100.99M33.00 82.60L51.39 102.77M33.00 82.60L49.45 104.39M33.00 82.60L47.37 105.81M33.00 82.60L45.17 107.04M33.00 82.60L42.86 108.06M33.00 82.60L40.47 108.86M33.00 82.60L38.02 109.44M33.00 82.60L35.52 109.78M33.00 82.60L33.00 109.90M33.00 82.60L30.48 109.78M33.00 82.60L27.98 109.44M33.00 82.60L25.53 108.86M33.00 82.60L23.14 108.06M33.00 82.60L20.83 107.04M33.00 82.60L18.63 105.81M33.00 82.60L16.55 104.39M33.00 82.60L14.61 102.77M33.00 82.60L12.83 100.99M33.00 82.60L11.21 99.05M33.00 82.60L9.79 96.97M33.00 82.60L8.56 94.77M33.00 82.60L7.54 92.46M33.00 82.60L6.74 90.07M33.00 82.60L6.16 87.62M33.00 82.60L5.82 85.12M33.00 82.60L5.70 82.60M33.00 82.60L5.82 80.08M33.00 82.60L6.16 77.58M33.00 82.60L6.74 75.13M33.00 82.60L7.54 72.74M33.00 82.60L8.56 70.43M33.00 82.60L9.79 68.23M33.00 82.60L11.21 66.15M33.00 82.60L12.83 64.21M33.00 82.60L14.61 62.43M33.00 82.60L16.55 60.81M33.00 82.60L18.63 59.39M33.00 82.60L20.83 58.16M33.00 82.60L23.14 57.14M33.00 82.60L25.53 56.34M33.00 82.60L27.98 55.76M33.00 82.60L30.48 55.42M33.00 82.60L33.00 55.30M33.00 82.60L35.52 55.42M33.00 82.60L38.02 55.76M33.00 82.60L40.47 56.34M33.00 82.60L42.86 57.14M33.00 82.60L45.17 58.16M33.00 82.60L47.37 59.39M33.00 82.60L49.45 60.81M33.00 82.60L51.39 62.43M33.00 82.60L53.17 64.21M33.00 82.60L54.79 66.15M33.00 82.60L56.21 68.23M33.00 82.60L57.44 70.43M33.00 82.60L58.46 72.74M33.00 82.60L59.26 75.13M33.00 82.60L59.84 77.58M33.00 82.60L60.18 80.08" stroke="#a07c46" stroke-width="0.6" opacity="1"/><circle cx="33" cy="82.6" r="8" fill="#38342f"/><circle cx="70.4" cy="92" r="12.2" fill="#7d818a" opacity="0.9"/><clipPath id="c62275869"><circle cx="54.6" cy="113.5" r="20.8"/></clipPath><g clip-path="url(#c62275869)" opacity="0.8"><circle cx="54.6" cy="113.5" r="20.8" fill="#6e7070"/><path d="M33.8 92.70H75.4M33.8 94.50H75.4M33.8 96.30H75.4M33.8 98.10H75.4M33.8 99.90H75.4M33.8 101.70H75.4M33.8 103.50H75.4M33.8 105.30H75.4M33.8 107.10H75.4M33.8 108.90H75.4M33.8 110.70H75.4M33.8 112.50H75.4M33.8 114.30H75.4M33.8 116.10H75.4M33.8 117.90H75.4M33.8 119.70H75.4M33.8 121.50H75.4M33.8 123.30H75.4M33.8 125.10H75.4M33.8 126.90H75.4M33.8 128.70H75.4M33.8 130.50H75.4M33.8 132.30H75.4M33.8 134.10H75.4" stroke="#aaa" stroke-width="0.6"/></g><path d="M33.00 141.50L58.00 141.50M33.00 141.50L57.88 143.95M33.00 141.50L57.52 146.38M33.00 141.50L56.92 148.76M33.00 141.50L56.10 151.07M33.00 141.50L55.05 153.28M33.00 141.50L53.79 155.39M33.00 141.50L52.33 157.36M33.00 141.50L50.68 159.18M33.00 141.50L48.86 160.83M33.00 141.50L46.89 162.29M33.00 141.50L44.78 163.55M33.00 141.50L42.57 164.60M33.00 141.50L40.26 165.42M33.00 141.50L37.88 166.02M33.00 141.50L35.45 166.38M33.00 141.50L33.00 166.50M33.00 141.50L30.55 166.38M33.00 141.50L28.12 166.02M33.00 141.50L25.74 165.42M33.00 141.50L23.43 164.60M33.00 141.50L21.22 163.55M33.00 141.50L19.11 162.29M33.00 141.50L17.14 160.83M33.00 141.50L15.32 159.18M33.00 141.50L13.67 157.36M33.00 141.50L12.21 155.39M33.00 141.50L10.95 153.28M33.00 141.50L9.90 151.07M33.00 141.50L9.08 148.76M33.00 141.50L8.48 146.38M33.00 141.50L8.12 143.95M33.00 141.50L8.00 141.50M33.00 141.50L8.12 139.05M33.00 141.50L8.48 136.62M33.00 141.50L9.08 134.24M33.00 141.50L9.90 131.93M33.00 141.50L10.95 129.72M33.00 141.50L12.21 127.61M33.00 141.50L13.67 125.64M33.00 141.50L15.32 123.82M33.00 141.50L17.14 122.17M33.00 141.50L19.11 120.71M33.00 141.50L21.22 119.45M33.00 141.50L23.43 118.40M33.00 141.50L25.74 117.58M33.00 141.50L28.12 116.98M33.00 141.50L30.55 116.62M33.00 141.50L33.00 116.50M33.00 141.50L35.45 116.62M33.00 141.50L37.88 116.98M33.00 141.50L40.26 117.58M33.00 141.50L42.57 118.40M33.00 141.50L44.78 119.45M33.00 141.50L46.89 120.71M33.00 141.50L48.86 122.17M33.00 141.50L50.68 123.82M33.00 141.50L52.33 125.64M33.00 141.50L53.79 127.61M33.00 141.50L55.05 129.72M33.00 141.50L56.10 131.93M33.00 141.50L56.92 134.24M33.00 141.50L57.52 136.62M33.00 141.50L57.88 139.05" stroke="#d3d6db" stroke-width="0.6" opacity="1"/><circle cx="33" cy="141.5" r="7.3" fill="#7a7e85"/><circle cx="132" cy="110" r="20.8" fill="#7d818a"/><circle cx="158.8" cy="112.8" r="15" fill="#6a5636" opacity="0.85"/><circle cx="115" cy="146.6" r="8.6" fill="#6e7070"/><circle cx="205" cy="0" r="15" fill="#7d818a"/><clipPath id="c976787301"><circle cx="238" cy="-3" r="23"/></clipPath><g clip-path="url(#c976787301)" opacity="0.95"><circle cx="238" cy="-3" r="23" fill="#6a5636"/><path d="M215 -26.00H261M215 -23.80H261M215 -21.60H261M215 -19.40H261M215 -17.20H261M215 -15.00H261M215 -12.80H261M215 -10.60H261M215 -8.40H261M215 -6.20H261M215 -4.00H261M215 -1.80H261M215 0.40H261M215 2.60H261M215 4.80H261M215 7.00H261M215 9.20H261M215 11.40H261M215 13.60H261M215 15.80H261M215 18.00H261" stroke="#5a4a30" stroke-width="0.6"/></g><path d="M316.40 10.00L341.40 10.00M316.40 10.00L341.28 12.45M316.40 10.00L340.92 14.88M316.40 10.00L340.32 17.26M316.40 10.00L339.50 19.57M316.40 10.00L338.45 21.78M316.40 10.00L337.19 23.89M316.40 10.00L335.73 25.86M316.40 10.00L334.08 27.68M316.40 10.00L332.26 29.33M316.40 10.00L330.29 30.79M316.40 10.00L328.18 32.05M316.40 10.00L325.97 33.10M316.40 10.00L323.66 33.92M316.40 10.00L321.28 34.52M316.40 10.00L318.85 34.88M316.40 10.00L316.40 35.00M316.40 10.00L313.95 34.88M316.40 10.00L311.52 34.52M316.40 10.00L309.14 33.92M316.40 10.00L306.83 33.10M316.40 10.00L304.62 32.05M316.40 10.00L302.51 30.79M316.40 10.00L300.54 29.33M316.40 10.00L298.72 27.68M316.40 10.00L297.07 25.86M316.40 10.00L295.61 23.89M316.40 10.00L294.35 21.78M316.40 10.00L293.30 19.57M316.40 10.00L292.48 17.26M316.40 10.00L291.88 14.88M316.40 10.00L291.52 12.45M316.40 10.00L291.40 10.00M316.40 10.00L291.52 7.55M316.40 10.00L291.88 5.12M316.40 10.00L292.48 2.74M316.40 10.00L293.30 0.43M316.40 10.00L294.35 -1.78M316.40 10.00L295.61 -3.89M316.40 10.00L297.07 -5.86M316.40 10.00L298.72 -7.68M316.40 10.00L300.54 -9.33M316.40 10.00L302.51 -10.79M316.40 10.00L304.62 -12.05M316.40 10.00L306.83 -13.10M316.40 10.00L309.14 -13.92M316.40 10.00L311.52 -14.52M316.40 10.00L313.95 -14.88M316.40 10.00L316.40 -15.00M316.40 10.00L318.85 -14.88M316.40 10.00L321.28 -14.52M316.40 10.00L323.66 -13.92M316.40 10.00L325.97 -13.10M316.40 10.00L328.18 -12.05M316.40 10.00L330.29 -10.79M316.40 10.00L332.26 -9.33M316.40 10.00L334.08 -7.68M316.40 10.00L335.73 -5.86M316.40 10.00L337.19 -3.89M316.40 10.00L338.45 -1.78M316.40 10.00L339.50 0.43M316.40 10.00L340.32 2.74M316.40 10.00L340.92 5.12M316.40 10.00L341.28 7.55" stroke="#d3d6db" stroke-width="0.6" opacity="1"/><circle cx="316.4" cy="10" r="7.3" fill="#7a7e85"/><clipPath id="c544854973"><circle cx="312" cy="47.4" r="14.4"/></clipPath><g clip-path="url(#c544854973)" opacity="0.9"><circle cx="312" cy="47.4" r="14.4" fill="#6e7070"/><path d="M297.6 33.00H326.4M297.6 34.80H326.4M297.6 36.60H326.4M297.6 38.40H326.4M297.6 40.20H326.4M297.6 42.00H326.4M297.6 43.80H326.4M297.6 45.60H326.4M297.6 47.40H326.4M297.6 49.20H326.4M297.6 51.00H326.4M297.6 52.80H326.4M297.6 54.60H326.4M297.6 56.40H326.4M297.6 58.20H326.4M297.6 60.00H326.4" stroke="#999" stroke-width="0.6"/></g><clipPath id="c230530419"><circle cx="345" cy="35.2" r="23.7"/></clipPath><g clip-path="url(#c230530419)" opacity="0.85"><circle cx="345" cy="35.2" r="23.7" fill="#6a5636"/><path d="M321.30 11.500000000000004V58.900000000000006M323.10 11.500000000000004V58.900000000000006M324.90 11.500000000000004V58.900000000000006M326.70 11.500000000000004V58.900000000000006M328.50 11.500000000000004V58.900000000000006M330.30 11.500000000000004V58.900000000000006M332.10 11.500000000000004V58.900000000000006M333.90 11.500000000000004V58.900000000000006M335.70 11.500000000000004V58.900000000000006M337.50 11.500000000000004V58.900000000000006M339.30 11.500000000000004V58.900000000000006M341.10 11.500000000000004V58.900000000000006M342.90 11.500000000000004V58.900000000000006M344.70 11.500000000000004V58.900000000000006M346.50 11.500000000000004V58.900000000000006M348.30 11.500000000000004V58.900000000000006M350.10 11.500000000000004V58.900000000000006M351.90 11.500000000000004V58.900000000000006M353.70 11.500000000000004V58.900000000000006M355.50 11.500000000000004V58.900000000000006M357.30 11.500000000000004V58.900000000000006M359.10 11.500000000000004V58.900000000000006M360.90 11.500000000000004V58.900000000000006M362.70 11.500000000000004V58.900000000000006M364.50 11.500000000000004V58.900000000000006M366.30 11.500000000000004V58.900000000000006M368.10 11.500000000000004V58.900000000000006" stroke="#8f7446" stroke-width="0.6"/></g><path d="M228.00 82.60L255.30 82.60M228.00 82.60L255.18 85.12M228.00 82.60L254.84 87.62M228.00 82.60L254.26 90.07M228.00 82.60L253.46 92.46M228.00 82.60L252.44 94.77M228.00 82.60L251.21 96.97M228.00 82.60L249.79 99.05M228.00 82.60L248.17 100.99M228.00 82.60L246.39 102.77M228.00 82.60L244.45 104.39M228.00 82.60L242.37 105.81M228.00 82.60L240.17 107.04M228.00 82.60L237.86 108.06M228.00 82.60L235.47 108.86M228.00 82.60L233.02 109.44M228.00 82.60L230.52 109.78M228.00 82.60L228.00 109.90M228.00 82.60L225.48 109.78M228.00 82.60L222.98 109.44M228.00 82.60L220.53 108.86M228.00 82.60L218.14 108.06M228.00 82.60L215.83 107.04M228.00 82.60L213.63 105.81M228.00 82.60L211.55 104.39M228.00 82.60L209.61 102.77M228.00 82.60L207.83 100.99M228.00 82.60L206.21 99.05M228.00 82.60L204.79 96.97M228.00 82.60L203.56 94.77M228.00 82.60L202.54 92.46M228.00 82.60L201.74 90.07M228.00 82.60L201.16 87.62M228.00 82.60L200.82 85.12M228.00 82.60L200.70 82.60M228.00 82.60L200.82 80.08M228.00 82.60L201.16 77.58M228.00 82.60L201.74 75.13M228.00 82.60L202.54 72.74M228.00 82.60L203.56 70.43M228.00 82.60L204.79 68.23M228.00 82.60L206.21 66.15M228.00 82.60L207.83 64.21M228.00 82.60L209.61 62.43M228.00 82.60L211.55 60.81M228.00 82.60L213.63 59.39M228.00 82.60L215.83 58.16M228.00 82.60L218.14 57.14M228.00 82.60L220.53 56.34M228.00 82.60L222.98 55.76M228.00 82.60L225.48 55.42M228.00 82.60L228.00 55.30M228.00 82.60L230.52 55.42M228.00 82.60L233.02 55.76M228.00 82.60L235.47 56.34M228.00 82.60L237.86 57.14M228.00 82.60L240.17 58.16M228.00 82.60L242.37 59.39M228.00 82.60L244.45 60.81M228.00 82.60L246.39 62.43M228.00 82.60L248.17 64.21M228.00 82.60L249.79 66.15M228.00 82.60L251.21 68.23M228.00 82.60L252.44 70.43M228.00 82.60L253.46 72.74M228.00 82.60L254.26 75.13M228.00 82.60L254.84 77.58M228.00 82.60L255.18 80.08" stroke="#a07c46" stroke-width="0.6" opacity="1"/><circle cx="228" cy="82.6" r="8" fill="#38342f"/><circle cx="265.4" cy="92" r="12.2" fill="#7d818a" opacity="0.9"/><clipPath id="c40260662"><circle cx="249.6" cy="113.5" r="20.8"/></clipPath><g clip-path="url(#c40260662)" opacity="0.8"><circle cx="249.6" cy="113.5" r="20.8" fill="#6e7070"/><path d="M228.79999999999998 92.70H270.4M228.79999999999998 94.50H270.4M228.79999999999998 96.30H270.4M228.79999999999998 98.10H270.4M228.79999999999998 99.90H270.4M228.79999999999998 101.70H270.4M228.79999999999998 103.50H270.4M228.79999999999998 105.30H270.4M228.79999999999998 107.10H270.4M228.79999999999998 108.90H270.4M228.79999999999998 110.70H270.4M228.79999999999998 112.50H270.4M228.79999999999998 114.30H270.4M228.79999999999998 116.10H270.4M228.79999999999998 117.90H270.4M228.79999999999998 119.70H270.4M228.79999999999998 121.50H270.4M228.79999999999998 123.30H270.4M228.79999999999998 125.10H270.4M228.79999999999998 126.90H270.4M228.79999999999998 128.70H270.4M228.79999999999998 130.50H270.4M228.79999999999998 132.30H270.4M228.79999999999998 134.10H270.4" stroke="#aaa" stroke-width="0.6"/></g><path d="M228.00 141.50L253.00 141.50M228.00 141.50L252.88 143.95M228.00 141.50L252.52 146.38M228.00 141.50L251.92 148.76M228.00 141.50L251.10 151.07M228.00 141.50L250.05 153.28M228.00 141.50L248.79 155.39M228.00 141.50L247.33 157.36M228.00 141.50L245.68 159.18M228.00 141.50L243.86 160.83M228.00 141.50L241.89 162.29M228.00 141.50L239.78 163.55M228.00 141.50L237.57 164.60M228.00 141.50L235.26 165.42M228.00 141.50L232.88 166.02M228.00 141.50L230.45 166.38M228.00 141.50L228.00 166.50M228.00 141.50L225.55 166.38M228.00 141.50L223.12 166.02M228.00 141.50L220.74 165.42M228.00 141.50L218.43 164.60M228.00 141.50L216.22 163.55M228.00 141.50L214.11 162.29M228.00 141.50L212.14 160.83M228.00 141.50L210.32 159.18M228.00 141.50L208.67 157.36M228.00 141.50L207.21 155.39M228.00 141.50L205.95 153.28M228.00 141.50L204.90 151.07M228.00 141.50L204.08 148.76M228.00 141.50L203.48 146.38M228.00 141.50L203.12 143.95M228.00 141.50L203.00 141.50M228.00 141.50L203.12 139.05M228.00 141.50L203.48 136.62M228.00 141.50L204.08 134.24M228.00 141.50L204.90 131.93M228.00 141.50L205.95 129.72M228.00 141.50L207.21 127.61M228.00 141.50L208.67 125.64M228.00 141.50L210.32 123.82M228.00 141.50L212.14 122.17M228.00 141.50L214.11 120.71M228.00 141.50L216.22 119.45M228.00 141.50L218.43 118.40M228.00 141.50L220.74 117.58M228.00 141.50L223.12 116.98M228.00 141.50L225.55 116.62M228.00 141.50L228.00 116.50M228.00 141.50L230.45 116.62M228.00 141.50L232.88 116.98M228.00 141.50L235.26 117.58M228.00 141.50L237.57 118.40M228.00 141.50L239.78 119.45M228.00 141.50L241.89 120.71M228.00 141.50L243.86 122.17M228.00 141.50L245.68 123.82M228.00 141.50L247.33 125.64M228.00 141.50L248.79 127.61M228.00 141.50L250.05 129.72M228.00 141.50L251.10 131.93M228.00 141.50L251.92 134.24M228.00 141.50L252.52 136.62M228.00 141.50L252.88 139.05" stroke="#d3d6db" stroke-width="0.6" opacity="1"/><circle cx="228" cy="141.5" r="7.3" fill="#7a7e85"/><circle cx="327" cy="110" r="20.8" fill="#7d818a"/><circle cx="353.8" cy="112.8" r="15" fill="#6a5636" opacity="0.85"/><circle cx="310" cy="146.6" r="8.6" fill="#6e7070"/></svg></div><div class="plus" style="border-color:#f4f4f4"></div><div class="lab">Tapete 50540</div></div>
<div class="card" style="left:1229.6px;top:235.6px"><div class="img"><svg width="278" height="142" viewBox="0 0 278 142"><rect width="278" height="142" fill="#eeede9"/><clipPath id="c92285142"><circle cx="15" cy="8" r="15"/></clipPath><g clip-path="url(#c92285142)"><path d="M21.4 -11.7L28.8 23.5M-1.8 1.2L32.8 11.3M35.1 6.4L4.3 25.0M-0.7 -1.3L26.8 22.0M32.5 3.2L-3.1 9.1M-1.6 -5.4L9.9 28.7M-4.1 13.9L31.6 19.1M10.7 -11.5L32.8 17.0M-0.1 -2.8L33.4 10.2M34.3 4.6L4.1 24.2M16.3 -10.3L7.2 24.6M6.9 -8.1L21.0 25.0M-0.6 -5.9L34.7 1.2M-2.0 0.6L26.8 22.3" stroke="#444" stroke-width="0.5" fill="none"/></g><circle cx="88" cy="-4" r="16" fill="none" stroke="#6f6f6f" stroke-width="0.9"/><circle cx="125.8" cy="1.5" r="24" fill="#a2a2a2"/><circle cx="130.8" cy="6.5" r="12" fill="none" stroke="#cacaca" stroke-width="2.6"/><circle cx="133" cy="54" r="20.6" fill="none" stroke="#a4a4a4" stroke-width="0.8"/><clipPath id="c459123743"><circle cx="66" cy="91.7" r="24.7"/></clipPath><g clip-path="url(#c459123743)"><circle cx="66" cy="91.7" r="24.7" fill="#cbcbcb"/><path d="M89.5 73.6L44.2 111.8M96.1 90.0L38.5 104.1M53.8 61.9L96.0 103.6M99.4 85.5L53.7 123.3M48.8 67.6L83.6 115.6M53.8 64.6L81.8 116.9M91.8 69.4L71.9 125.3M80.3 62.6L78.1 121.8M36.8 73.8L65.1 125.9M41.1 67.4L55.5 124.9M36.7 86.8L94.2 101.1M81.6 63.5L34.9 100.0M56.9 62.9L85.5 114.8M54.0 62.2L54.6 121.5" stroke="#7a7a7a" stroke-width="0.7" fill="none"/></g><circle cx="21.5" cy="123.5" r="20.5" fill="none" stroke="#a9a9a9" stroke-width="0.8"/><circle cx="27.3" cy="134.4" r="25" fill="none" stroke="#6f6f6f" stroke-width="1.1"/><circle cx="161.7" cy="142.3" r="19.4" fill="#d2d2d2"/><clipPath id="c73833652"><circle cx="210" cy="8" r="15"/></clipPath><g clip-path="url(#c73833652)"><path d="M220.6 -10.0L189.1 7.3M204.6 -9.6L207.5 26.3M191.4 9.3L226.8 16.2M207.4 -13.4L191.4 18.8M228.0 2.8L197.5 21.9M199.9 -7.4L212.5 26.3M192.1 5.8L228.0 8.4M199.1 -9.0L230.2 9.1M191.1 11.0L226.5 17.6M195.9 -4.7L228.9 9.6M195.6 -6.0L207.7 27.9M192.9 2.3L227.7 11.3M203.7 -11.2L198.1 24.4M220.5 -9.0L190.1 10.3" stroke="#444" stroke-width="0.5" fill="none"/></g><circle cx="283" cy="-4" r="16" fill="none" stroke="#6f6f6f" stroke-width="0.9"/><circle cx="320.8" cy="1.5" r="24" fill="#a2a2a2"/><circle cx="325.8" cy="6.5" r="12" fill="none" stroke="#cacaca" stroke-width="2.6"/><circle cx="328" cy="54" r="20.6" fill="none" stroke="#a4a4a4" stroke-width="0.8"/><clipPath id="c298952339"><circle cx="261" cy="91.7" r="24.7"/></clipPath><g clip-path="url(#c298952339)"><circle cx="261" cy="91.7" r="24.7" fill="#cbcbcb"/><path d="M263.6 56.5L227.8 103.7M281.1 69.4L248.9 119.2M249.7 59.7L294.1 99.0M231.8 83.7L284.5 110.8M230.9 103.7L290.1 105.9M240.8 68.4L290.6 100.5M233.8 79.8L287.0 106.0M277.8 66.2L257.7 122.0M228.2 93.4L282.9 116.2M289.3 81.0L230.8 90.3M282.5 71.3L242.0 114.5M281.2 63.6L226.7 87.0M275.0 65.4L243.1 115.4M255.6 62.2L274.3 118.5" stroke="#7a7a7a" stroke-width="0.7" fill="none"/></g><circle cx="216.5" cy="123.5" r="20.5" fill="none" stroke="#a9a9a9" stroke-width="0.8"/><circle cx="222.3" cy="134.4" r="25" fill="none" stroke="#6f6f6f" stroke-width="1.1"/><circle cx="356.7" cy="142.3" r="19.4" fill="#d2d2d2"/></svg></div><div class="plus"></div><div class="lab">Tapete 50536</div></div>
<div class="card" style="left:28.0px;top:444.2px"><div class="img"><svg width="278" height="142" viewBox="0 0 278 142"><rect width="278" height="142" fill="#e3e0dc"/></svg></div><div class="plus"></div><div class="lab">Tapete 50535</div></div>
<div class="card" style="left:328.4px;top:444.2px"><div class="img"><svg width="278" height="142" viewBox="0 0 278 142"><rect width="278" height="142" fill="#83b5b9"/></svg></div><div class="plus"></div><div class="lab">Tapete 50534</div></div>
<div class="card" style="left:628.8px;top:444.2px"><div class="img"><svg width="278" height="142" viewBox="0 0 278 142"><rect width="278" height="142" fill="#eeede9"/><clipPath id="c517031191"><circle cx="15" cy="2.5" r="15"/></clipPath><g clip-path="url(#c517031191)"><path d="M32.0 -9.6L17.2 23.2M-1.1 -8.1L34.1 -0.6M1.2 -9.6L32.6 7.9M-0.8 -12.3L34.7 -6.4M3.4 -14.2L35.4 2.2M17.9 -18.6L32.8 14.1M30.6 -7.0L-2.7 6.9M1.6 -10.9L33.8 5.3M9.6 -15.0L26.2 17.0M-4.8 3.5L28.5 17.0M33.0 2.9L-3.0 3.7M24.0 -16.0L25.8 20.0M-0.9 -6.8L33.3 4.6M-3.0 -5.5L21.3 21.1" stroke="#444" stroke-width="0.5" fill="none"/></g><circle cx="88" cy="-9.5" r="16" fill="none" stroke="#7f7d8c" stroke-width="0.9"/><circle cx="126.8" cy="-3.3" r="22.7" fill="#d8d1c2"/><circle cx="132" cy="2.9" r="12" fill="none" stroke="#9fd3dc" stroke-width="2.2"/><circle cx="133" cy="48.5" r="20.6" fill="none" stroke="#a4a4a4" stroke-width="0.8"/><clipPath id="c173343387"><circle cx="66" cy="86.2" r="24.7"/></clipPath><g clip-path="url(#c173343387)"><circle cx="66" cy="86.2" r="24.7" fill="#a9d7dd"/><path d="M79.2 57.2L76.1 116.4M96.1 87.2L37.5 96.1M69.1 52.5L35.8 101.5M93.0 71.6L50.0 112.4M93.4 66.5L67.7 119.9M91.9 71.7L39.4 99.4M96.0 83.2L39.2 100.1M42.3 68.4L87.6 106.5M60.9 56.5L60.4 115.8M65.6 54.4L45.0 110.0M95.8 74.5L52.8 115.3M47.0 63.1L90.3 103.6M97.0 78.7L48.7 113.0M56.2 56.8L57.5 116.0" stroke="#7f9599" stroke-width="0.7" fill="none"/></g><circle cx="21.5" cy="122.4" r="20.5" fill="none" stroke="#a9a9a9" stroke-width="0.8"/><circle cx="27.3" cy="132.20000000000002" r="25" fill="none" stroke="#7f7d8c" stroke-width="1.1"/><circle cx="161.7" cy="135.15" r="19.4" fill="#a9d7dd"/><clipPath id="c29997207"><circle cx="210" cy="2.5" r="15"/></clipPath><g clip-path="url(#c29997207)"><path d="M224.6 -8.0L196.2 14.1M193.8 -5.7L223.3 14.9M195.0 -9.9L211.9 21.9M224.4 -8.9L201.2 18.6M228.7 11.1L192.9 14.0M193.1 -3.9L227.3 7.5M201.6 -13.4L219.1 18.0M227.9 -1.0L191.9 0.7M191.9 12.2L227.9 12.4M198.5 -11.8L215.4 20.0M230.2 1.5L198.9 19.4M199.1 -12.7L211.4 21.1M189.9 -0.5L219.1 20.6M203.1 -14.4L210.5 20.8" stroke="#444" stroke-width="0.5" fill="none"/></g><circle cx="283" cy="-9.5" r="16" fill="none" stroke="#7f7d8c" stroke-width="0.9"/><circle cx="321.8" cy="-3.3" r="22.7" fill="#d8d1c2"/><circle cx="327" cy="2.9" r="12" fill="none" stroke="#9fd3dc" stroke-width="2.2"/><circle cx="328" cy="48.5" r="20.6" fill="none" stroke="#a4a4a4" stroke-width="0.8"/><clipPath id="c93146944"><circle cx="261" cy="86.2" r="24.7"/></clipPath><g clip-path="url(#c93146944)"><circle cx="261" cy="86.2" r="24.7" fill="#a9d7dd"/><path d="M274.1 53.7L226.1 88.5M255.2 56.9L274.2 113.0M288.7 72.5L230.3 82.4M243.0 58.4L294.0 88.6M227.3 86.9L280.0 114.0M293.3 80.7L244.7 114.6M276.5 54.6L225.8 85.3M280.3 62.9L252.1 115.1M279.9 59.1L270.9 117.7M230.6 103.5L289.8 106.1M273.5 59.3L246.6 112.1M290.5 82.6L232.5 94.9M283.2 62.7L228.7 86.0M243.7 60.2L290.4 96.7" stroke="#7f9599" stroke-width="0.7" fill="none"/></g><circle cx="216.5" cy="122.4" r="20.5" fill="none" stroke="#a9a9a9" stroke-width="0.8"/><circle cx="222.3" cy="132.20000000000002" r="25" fill="none" stroke="#7f7d8c" stroke-width="1.1"/><circle cx="356.7" cy="135.15" r="19.4" fill="#a9d7dd"/></svg></div><div class="plus"></div><div class="lab">Tapete 50533</div></div>
<div class="card" style="left:929.2px;top:444.2px"><div class="img"><svg width="278" height="142" viewBox="0 0 278 142"><rect width="278" height="142" fill="#bfc0ba"/></svg></div><div class="plus"></div><div class="lab">Tapete 50537</div></div>
<div class="card" style="left:1229.6px;top:444.2px"><div class="img"><svg width="278" height="142" viewBox="0 0 278 142"><rect width="278" height="142" fill="#ebeadf"/><g opacity="1"><path d="M120.8 21.5L146.6 33.7M120.3 25.2L148.5 21.5M120.7 23.4L144.2 39.4M119.6 26.9L148.0 27.7M120.3 25.2L141.0 44.7M118.6 28.5L146.6 33.7M119.6 26.9L136.9 49.4M117.4 29.9L144.2 39.4M118.6 28.5L132.2 53.5M116.0 31.1L141.0 44.7M117.4 29.9L126.9 56.7M114.4 32.1L136.9 49.4M116.0 31.1L121.2 59.1M112.7 32.8L132.2 53.5M114.4 32.1L115.2 60.5M110.9 33.2L126.9 56.7M112.7 32.8L109.0 61.0M109.0 33.4L121.2 59.1M110.9 33.2L102.8 60.5M107.1 33.2L115.2 60.5M109.0 33.4L96.8 59.1M105.3 32.8L109.0 61.0M107.1 33.2L91.1 56.7M103.6 32.1L102.8 60.5M105.3 32.8L85.8 53.5M102.0 31.1L96.8 59.1M103.6 32.1L81.1 49.4M100.6 29.9L91.1 56.7M102.0 31.1L77.0 44.7M99.4 28.5L85.8 53.5M100.6 29.9L73.8 39.4M98.4 26.9L81.1 49.4M99.4 28.5L71.4 33.7M97.7 25.2L77.0 44.7M98.4 26.9L70.0 27.7M97.3 23.4L73.8 39.4M97.7 25.2L69.5 21.5M97.2 21.5L71.4 33.7M97.3 23.4L70.0 15.3M97.3 19.6L70.0 27.7M97.2 21.5L71.4 9.3M97.7 17.8L69.5 21.5M97.3 19.6L73.8 3.6M98.4 16.1L70.0 15.3M97.7 17.8L77.0 -1.7M99.4 14.5L71.4 9.3M98.4 16.1L81.1 -6.4M100.6 13.1L73.8 3.6M99.4 14.5L85.8 -10.5M102.0 11.9L77.0 -1.7M100.6 13.1L91.1 -13.7M103.6 10.9L81.1 -6.4M102.0 11.9L96.8 -16.1M105.3 10.2L85.8 -10.5M103.6 10.9L102.8 -17.5M107.1 9.8L91.1 -13.7M105.3 10.2L109.0 -18.0M109.0 9.7L96.8 -16.1M107.1 9.8L115.2 -17.5M110.9 9.8L102.8 -17.5M109.0 9.7L121.2 -16.1M112.7 10.2L109.0 -18.0M110.9 9.8L126.9 -13.7M114.4 10.9L115.2 -17.5M112.7 10.2L132.2 -10.5M116.0 11.9L121.2 -16.1M114.4 10.9L136.9 -6.4M117.4 13.1L126.9 -13.7M116.0 11.9L141.0 -1.7M118.6 14.5L132.2 -10.5M117.4 13.1L144.2 3.6M119.6 16.1L136.9 -6.4M118.6 14.5L146.6 9.3M120.3 17.8L141.0 -1.7M119.6 16.1L148.0 15.3M120.7 19.6L144.2 3.6M120.3 17.8L148.5 21.5M120.8 21.5L146.6 9.3M120.7 19.6L148.0 27.7M120.7 23.4L148.0 15.3" stroke="#d2d3cd" stroke-width="1.5" fill="none"/><path d="M109.0 21.5L120.8 21.5M109.0 21.5L120.4 24.6M109.0 21.5L119.3 27.4M109.0 21.5L117.4 29.9M109.0 21.5L114.9 31.8M109.0 21.5L112.1 32.9M109.0 21.5L109.0 33.4M109.0 21.5L105.9 32.9M109.0 21.5L103.1 31.8M109.0 21.5L100.6 29.9M109.0 21.5L98.7 27.4M109.0 21.5L97.6 24.6M109.0 21.5L97.2 21.5M109.0 21.5L97.6 18.4M109.0 21.5L98.7 15.6M109.0 21.5L100.6 13.1M109.0 21.5L103.1 11.2M109.0 21.5L105.9 10.1M109.0 21.5L109.0 9.7M109.0 21.5L112.1 10.1M109.0 21.5L114.9 11.2M109.0 21.5L117.4 13.1M109.0 21.5L119.3 15.6M109.0 21.5L120.4 18.4" stroke="#d2d3cd" stroke-width="1.0499999999999998" fill="none"/><circle cx="109" cy="21.5" r="11.85" fill="none" stroke="#d2d3cd" stroke-width="1.5"/></g><g opacity="1"><path d="M309.9 21.5L335.6 33.7M309.3 25.2L337.5 21.5M309.7 23.4L333.2 39.4M308.6 26.9L337.0 27.7M309.3 25.2L330.0 44.7M307.6 28.5L335.6 33.7M308.6 26.9L325.9 49.4M306.4 29.9L333.2 39.4M307.6 28.5L321.2 53.5M305.0 31.1L330.0 44.7M306.4 29.9L315.9 56.7M303.4 32.1L325.9 49.4M305.0 31.1L310.2 59.1M301.7 32.8L321.2 53.5M303.4 32.1L304.2 60.5M299.9 33.2L315.9 56.7M301.7 32.8L298.0 61.0M298.0 33.4L310.2 59.1M299.9 33.2L291.8 60.5M296.1 33.2L304.2 60.5M298.0 33.4L285.8 59.1M294.3 32.8L298.0 61.0M296.1 33.2L280.1 56.7M292.6 32.1L291.8 60.5M294.3 32.8L274.8 53.5M291.0 31.1L285.8 59.1M292.6 32.1L270.1 49.4M289.6 29.9L280.1 56.7M291.0 31.1L266.0 44.7M288.4 28.5L274.8 53.5M289.6 29.9L262.8 39.4M287.4 26.9L270.1 49.4M288.4 28.5L260.4 33.7M286.7 25.2L266.0 44.7M287.4 26.9L259.0 27.7M286.3 23.4L262.8 39.4M286.7 25.2L258.5 21.5M286.1 21.5L260.4 33.7M286.3 23.4L259.0 15.3M286.3 19.6L259.0 27.7M286.1 21.5L260.4 9.3M286.7 17.8L258.5 21.5M286.3 19.6L262.8 3.6M287.4 16.1L259.0 15.3M286.7 17.8L266.0 -1.7M288.4 14.5L260.4 9.3M287.4 16.1L270.1 -6.4M289.6 13.1L262.8 3.6M288.4 14.5L274.8 -10.5M291.0 11.9L266.0 -1.7M289.6 13.1L280.1 -13.7M292.6 10.9L270.1 -6.4M291.0 11.9L285.8 -16.1M294.3 10.2L274.8 -10.5M292.6 10.9L291.8 -17.5M296.1 9.8L280.1 -13.7M294.3 10.2L298.0 -18.0M298.0 9.7L285.8 -16.1M296.1 9.8L304.2 -17.5M299.9 9.8L291.8 -17.5M298.0 9.7L310.2 -16.1M301.7 10.2L298.0 -18.0M299.9 9.8L315.9 -13.7M303.4 10.9L304.2 -17.5M301.7 10.2L321.2 -10.5M305.0 11.9L310.2 -16.1M303.4 10.9L325.9 -6.4M306.4 13.1L315.9 -13.7M305.0 11.9L330.0 -1.7M307.6 14.5L321.2 -10.5M306.4 13.1L333.2 3.6M308.6 16.1L325.9 -6.4M307.6 14.5L335.6 9.3M309.3 17.8L330.0 -1.7M308.6 16.1L337.0 15.3M309.7 19.6L333.2 3.6M309.3 17.8L337.5 21.5M309.9 21.5L335.6 9.3M309.7 19.6L337.0 27.7M309.7 23.4L337.0 15.3" stroke="#d2d3cd" stroke-width="1.5" fill="none"/><path d="M298.0 21.5L309.9 21.5M298.0 21.5L309.4 24.6M298.0 21.5L308.3 27.4M298.0 21.5L306.4 29.9M298.0 21.5L303.9 31.8M298.0 21.5L301.1 32.9M298.0 21.5L298.0 33.4M298.0 21.5L294.9 32.9M298.0 21.5L292.1 31.8M298.0 21.5L289.6 29.9M298.0 21.5L287.7 27.4M298.0 21.5L286.6 24.6M298.0 21.5L286.1 21.5M298.0 21.5L286.6 18.4M298.0 21.5L287.7 15.6M298.0 21.5L289.6 13.1M298.0 21.5L292.1 11.2M298.0 21.5L294.9 10.1M298.0 21.5L298.0 9.7M298.0 21.5L301.1 10.1M298.0 21.5L303.9 11.2M298.0 21.5L306.4 13.1M298.0 21.5L308.3 15.6M298.0 21.5L309.4 18.4" stroke="#d2d3cd" stroke-width="1.0499999999999998" fill="none"/><circle cx="298" cy="21.5" r="11.85" fill="none" stroke="#d2d3cd" stroke-width="1.5"/></g><g opacity="1"><path d="M44.1 149.4L64.6 160.3M43.5 152.7L66.5 149.4M44.0 151.1L62.2 165.4M42.8 154.2L66.0 155.0M43.5 152.7L59.0 170.0M41.9 155.6L64.6 160.3M42.8 154.2L55.1 173.9M40.7 156.8L62.2 165.4M41.9 155.6L50.5 177.1M39.3 157.7L59.0 170.0M40.7 156.8L45.4 179.5M37.8 158.4L55.1 173.9M39.3 157.7L40.1 180.9M36.2 158.9L50.5 177.1M37.8 158.4L34.5 181.4M34.5 159.0L45.4 179.5M36.2 158.9L28.9 180.9M32.8 158.9L40.1 180.9M34.5 159.0L23.6 179.5M31.2 158.4L34.5 181.4M32.8 158.9L18.5 177.1M29.7 157.7L28.9 180.9M31.2 158.4L13.9 173.9M28.3 156.8L23.6 179.5M29.7 157.7L10.0 170.0M27.1 155.6L18.5 177.1M28.3 156.8L6.8 165.4M26.2 154.2L13.9 173.9M27.1 155.6L4.4 160.3M25.5 152.7L10.0 170.0M26.2 154.2L3.0 155.0M25.0 151.1L6.8 165.4M25.5 152.7L2.5 149.4M24.9 149.4L4.4 160.3M25.0 151.1L3.0 143.8M25.0 147.7L3.0 155.0M24.9 149.4L4.4 138.5M25.5 146.1L2.5 149.4M25.0 147.7L6.8 133.4M26.2 144.6L3.0 143.8M25.5 146.1L10.0 128.8M27.1 143.2L4.4 138.5M26.2 144.6L13.9 124.9M28.3 142.0L6.8 133.4M27.1 143.2L18.5 121.7M29.7 141.1L10.0 128.8M28.3 142.0L23.6 119.3M31.2 140.4L13.9 124.9M29.7 141.1L28.9 117.9M32.8 139.9L18.5 121.7M31.2 140.4L34.5 117.4M34.5 139.8L23.6 119.3M32.8 139.9L40.1 117.9M36.2 139.9L28.9 117.9M34.5 139.8L45.4 119.3M37.8 140.4L34.5 117.4M36.2 139.9L50.5 121.7M39.3 141.1L40.1 117.9M37.8 140.4L55.1 124.9M40.7 142.0L45.4 119.3M39.3 141.1L59.0 128.8M41.9 143.2L50.5 121.7M40.7 142.0L62.2 133.4M42.8 144.6L55.1 124.9M41.9 143.2L64.6 138.5M43.5 146.1L59.0 128.8M42.8 144.6L66.0 143.8M44.0 147.7L62.2 133.4M43.5 146.1L66.5 149.4M44.1 149.4L64.6 138.5M44.0 147.7L66.0 155.0M44.0 151.1L66.0 143.8" stroke="#d2d3cd" stroke-width="1.5" fill="none"/><path d="M34.5 149.4L44.1 149.4M34.5 149.4L43.8 151.9M34.5 149.4L42.8 154.2M34.5 149.4L41.3 156.2M34.5 149.4L39.3 157.7M34.5 149.4L37.0 158.7M34.5 149.4L34.5 159.0M34.5 149.4L32.0 158.7M34.5 149.4L29.7 157.7M34.5 149.4L27.7 156.2M34.5 149.4L26.2 154.2M34.5 149.4L25.2 151.9M34.5 149.4L24.9 149.4M34.5 149.4L25.2 146.9M34.5 149.4L26.2 144.6M34.5 149.4L27.7 142.6M34.5 149.4L29.7 141.1M34.5 149.4L32.0 140.1M34.5 149.4L34.5 139.8M34.5 149.4L37.0 140.1M34.5 149.4L39.3 141.1M34.5 149.4L41.3 142.6M34.5 149.4L42.8 144.6M34.5 149.4L43.8 146.9" stroke="#d2d3cd" stroke-width="1.0499999999999998" fill="none"/><circle cx="34.5" cy="149.4" r="9.6" fill="none" stroke="#d2d3cd" stroke-width="1.5"/></g><g opacity="1"><path d="M238.0 149.4L258.5 160.3M237.4 152.7L260.4 149.4M237.9 151.1L256.1 165.4M236.7 154.2L259.9 155.0M237.4 152.7L252.9 170.0M235.8 155.6L258.5 160.3M236.7 154.2L249.0 173.9M234.6 156.8L256.1 165.4M235.8 155.6L244.4 177.1M233.2 157.7L252.9 170.0M234.6 156.8L239.3 179.5M231.7 158.4L249.0 173.9M233.2 157.7L234.0 180.9M230.1 158.9L244.4 177.1M231.7 158.4L228.4 181.4M228.4 159.0L239.3 179.5M230.1 158.9L222.8 180.9M226.7 158.9L234.0 180.9M228.4 159.0L217.5 179.5M225.1 158.4L228.4 181.4M226.7 158.9L212.4 177.1M223.6 157.7L222.8 180.9M225.1 158.4L207.8 173.9M222.2 156.8L217.5 179.5M223.6 157.7L203.9 170.0M221.0 155.6L212.4 177.1M222.2 156.8L200.7 165.4M220.1 154.2L207.8 173.9M221.0 155.6L198.3 160.3M219.4 152.7L203.9 170.0M220.1 154.2L196.9 155.0M218.9 151.1L200.7 165.4M219.4 152.7L196.4 149.4M218.8 149.4L198.3 160.3M218.9 151.1L196.9 143.8M218.9 147.7L196.9 155.0M218.8 149.4L198.3 138.5M219.4 146.1L196.4 149.4M218.9 147.7L200.7 133.4M220.1 144.6L196.9 143.8M219.4 146.1L203.9 128.8M221.0 143.2L198.3 138.5M220.1 144.6L207.8 124.9M222.2 142.0L200.7 133.4M221.0 143.2L212.4 121.7M223.6 141.1L203.9 128.8M222.2 142.0L217.5 119.3M225.1 140.4L207.8 124.9M223.6 141.1L222.8 117.9M226.7 139.9L212.4 121.7M225.1 140.4L228.4 117.4M228.4 139.8L217.5 119.3M226.7 139.9L234.0 117.9M230.1 139.9L222.8 117.9M228.4 139.8L239.3 119.3M231.7 140.4L228.4 117.4M230.1 139.9L244.4 121.7M233.2 141.1L234.0 117.9M231.7 140.4L249.0 124.9M234.6 142.0L239.3 119.3M233.2 141.1L252.9 128.8M235.8 143.2L244.4 121.7M234.6 142.0L256.1 133.4M236.7 144.6L249.0 124.9M235.8 143.2L258.5 138.5M237.4 146.1L252.9 128.8M236.7 144.6L259.9 143.8M237.9 147.7L256.1 133.4M237.4 146.1L260.4 149.4M238.0 149.4L258.5 138.5M237.9 147.7L259.9 155.0M237.9 151.1L259.9 143.8" stroke="#d2d3cd" stroke-width="1.5" fill="none"/><path d="M228.4 149.4L238.0 149.4M228.4 149.4L237.7 151.9M228.4 149.4L236.7 154.2M228.4 149.4L235.2 156.2M228.4 149.4L233.2 157.7M228.4 149.4L230.9 158.7M228.4 149.4L228.4 159.0M228.4 149.4L225.9 158.7M228.4 149.4L223.6 157.7M228.4 149.4L221.6 156.2M228.4 149.4L220.1 154.2M228.4 149.4L219.1 151.9M228.4 149.4L218.8 149.4M228.4 149.4L219.1 146.9M228.4 149.4L220.1 144.6M228.4 149.4L221.6 142.6M228.4 149.4L223.6 141.1M228.4 149.4L225.9 140.1M228.4 149.4L228.4 139.8M228.4 149.4L230.9 140.1M228.4 149.4L233.2 141.1M228.4 149.4L235.2 142.6M228.4 149.4L236.7 144.6M228.4 149.4L237.7 146.9" stroke="#d2d3cd" stroke-width="1.0499999999999998" fill="none"/><circle cx="228.4" cy="149.4" r="9.6" fill="none" stroke="#d2d3cd" stroke-width="1.5"/></g><g opacity="1"><path d="M155.4 132.0L167.4 140.7M154.8 134.6L169.4 132.0M155.2 133.3L165.0 144.5M154.1 135.7L168.9 136.5M154.8 134.6L161.9 147.6M153.1 136.7L167.4 140.7M154.1 135.7L158.1 150.0M152.0 137.4L165.0 144.5M153.1 136.7L153.9 151.5M150.7 137.8L161.9 147.6M152.0 137.4L149.4 152.0M149.4 138.0L158.1 150.0M150.7 137.8L144.9 151.5M148.1 137.8L153.9 151.5M149.4 138.0L140.7 150.0M146.8 137.4L149.4 152.0M148.1 137.8L136.9 147.6M145.7 136.7L144.9 151.5M146.8 137.4L133.8 144.5M144.7 135.7L140.7 150.0M145.7 136.7L131.4 140.7M144.0 134.6L136.9 147.6M144.7 135.7L129.9 136.5M143.6 133.3L133.8 144.5M144.0 134.6L129.4 132.0M143.4 132.0L131.4 140.7M143.6 133.3L129.9 127.5M143.6 130.7L129.9 136.5M143.4 132.0L131.4 123.3M144.0 129.4L129.4 132.0M143.6 130.7L133.8 119.5M144.7 128.3L129.9 127.5M144.0 129.4L136.9 116.4M145.7 127.3L131.4 123.3M144.7 128.3L140.7 114.0M146.8 126.6L133.8 119.5M145.7 127.3L144.9 112.5M148.1 126.2L136.9 116.4M146.8 126.6L149.4 112.0M149.4 126.0L140.7 114.0M148.1 126.2L153.9 112.5M150.7 126.2L144.9 112.5M149.4 126.0L158.1 114.0M152.0 126.6L149.4 112.0M150.7 126.2L161.9 116.4M153.1 127.3L153.9 112.5M152.0 126.6L165.0 119.5M154.1 128.3L158.1 114.0M153.1 127.3L167.4 123.3M154.8 129.4L161.9 116.4M154.1 128.3L168.9 127.5M155.2 130.7L165.0 119.5M154.8 129.4L169.4 132.0M155.4 132.0L167.4 123.3M155.2 130.7L168.9 136.5M155.2 133.3L168.9 127.5" stroke="#e3e3d9" stroke-width="1.0" fill="none"/><path d="M149.4 132.0L155.4 132.0M149.4 132.0L155.2 133.6M149.4 132.0L154.6 135.0M149.4 132.0L153.6 136.2M149.4 132.0L152.4 137.2M149.4 132.0L151.0 137.8M149.4 132.0L149.4 138.0M149.4 132.0L147.8 137.8M149.4 132.0L146.4 137.2M149.4 132.0L145.2 136.2M149.4 132.0L144.2 135.0M149.4 132.0L143.6 133.6M149.4 132.0L143.4 132.0M149.4 132.0L143.6 130.4M149.4 132.0L144.2 129.0M149.4 132.0L145.2 127.8M149.4 132.0L146.4 126.8M149.4 132.0L147.8 126.2M149.4 132.0L149.4 126.0M149.4 132.0L151.0 126.2M149.4 132.0L152.4 126.8M149.4 132.0L153.6 127.8M149.4 132.0L154.6 129.0M149.4 132.0L155.2 130.4" stroke="#e3e3d9" stroke-width="0.7" fill="none"/><circle cx="149.4" cy="132" r="6.0" fill="none" stroke="#e3e3d9" stroke-width="1.0"/></g></svg></div><div class="plus"></div><div class="lab">Tapete 50532</div></div>
<div class="card" style="left:28.0px;top:652.8px"><div class="img"><svg width="278" height="142" viewBox="0 0 278 142"><rect width="278" height="142" fill="#e6e3d7"/></svg></div><div class="plus"></div><div class="lab">Tapete 50530</div></div>
<div class="card" style="left:328.4px;top:652.8px"><div class="img"><svg width="278" height="142" viewBox="0 0 278 142"><rect width="278" height="142" fill="#717171"/><g opacity="1"><circle cx="53" cy="45.3" r="35.2" fill="#bbbbbb"/><path d="M63.6 45.3L86.5 56.2M63.0 48.6L88.2 45.3M63.4 47.0L84.4 61.3M62.4 50.1L87.8 50.8M63.0 48.6L81.5 66.0M61.5 51.5L86.5 56.2M62.4 50.1L77.9 70.2M60.5 52.8L84.4 61.3M61.5 51.5L73.7 73.8M59.2 53.8L81.5 66.0M60.5 52.8L69.0 76.7M57.8 54.7L77.9 70.2M59.2 53.8L63.9 78.8M56.3 55.3L73.7 73.8M57.8 54.7L58.5 80.1M54.7 55.7L69.0 76.7M56.3 55.3L53.0 80.5M53.0 55.9L63.9 78.8M54.7 55.7L47.5 80.1M51.3 55.7L58.5 80.1M53.0 55.9L42.1 78.8M49.7 55.3L53.0 80.5M51.3 55.7L37.0 76.7M48.2 54.7L47.5 80.1M49.7 55.3L32.3 73.8M46.8 53.8L42.1 78.8M48.2 54.7L28.1 70.2M45.5 52.8L37.0 76.7M46.8 53.8L24.5 66.0M44.5 51.5L32.3 73.8M45.5 52.8L21.6 61.3M43.6 50.1L28.1 70.2M44.5 51.5L19.5 56.2M43.0 48.6L24.5 66.0M43.6 50.1L18.2 50.8M42.6 47.0L21.6 61.3M43.0 48.6L17.8 45.3M42.4 45.3L19.5 56.2M42.6 47.0L18.2 39.8M42.6 43.6L18.2 50.8M42.4 45.3L19.5 34.4M43.0 42.0L17.8 45.3M42.6 43.6L21.6 29.3M43.6 40.5L18.2 39.8M43.0 42.0L24.5 24.6M44.5 39.1L19.5 34.4M43.6 40.5L28.1 20.4M45.5 37.8L21.6 29.3M44.5 39.1L32.3 16.8M46.8 36.8L24.5 24.6M45.5 37.8L37.0 13.9M48.2 35.9L28.1 20.4M46.8 36.8L42.1 11.8M49.7 35.3L32.3 16.8M48.2 35.9L47.5 10.5M51.3 34.9L37.0 13.9M49.7 35.3L53.0 10.1M53.0 34.7L42.1 11.8M51.3 34.9L58.5 10.5M54.7 34.9L47.5 10.5M53.0 34.7L63.9 11.8M56.3 35.3L53.0 10.1M54.7 34.9L69.0 13.9M57.8 35.9L58.5 10.5M56.3 35.3L73.7 16.8M59.2 36.8L63.9 11.8M57.8 35.9L77.9 20.4M60.5 37.8L69.0 13.9M59.2 36.8L81.5 24.6M61.5 39.1L73.7 16.8M60.5 37.8L84.4 29.3M62.4 40.5L77.9 20.4M61.5 39.1L86.5 34.4M63.0 42.0L81.5 24.6M62.4 40.5L87.8 39.8M63.4 43.6L84.4 29.3M63.0 42.0L88.2 45.3M63.6 45.3L86.5 34.4M63.4 43.6L87.8 50.8M63.4 47.0L87.8 39.8" stroke="#8c8c8c" stroke-width="1.2" fill="none"/><circle cx="53" cy="45.3" r="10.56" fill="#a2a2a2"/><path d="M53.0 45.3L63.6 45.3M53.0 45.3L63.2 48.0M53.0 45.3L62.1 50.6M53.0 45.3L60.5 52.8M53.0 45.3L58.3 54.4M53.0 45.3L55.7 55.5M53.0 45.3L53.0 55.9M53.0 45.3L50.3 55.5M53.0 45.3L47.7 54.4M53.0 45.3L45.5 52.8M53.0 45.3L43.9 50.6M53.0 45.3L42.8 48.0M53.0 45.3L42.4 45.3M53.0 45.3L42.8 42.6M53.0 45.3L43.9 40.0M53.0 45.3L45.5 37.8M53.0 45.3L47.7 36.2M53.0 45.3L50.3 35.1M53.0 45.3L53.0 34.7M53.0 45.3L55.7 35.1M53.0 45.3L58.3 36.2M53.0 45.3L60.5 37.8M53.0 45.3L62.1 40.0M53.0 45.3L63.2 42.6" stroke="#8c8c8c" stroke-width="0.84" fill="none"/><circle cx="53" cy="45.3" r="10.56" fill="none" stroke="#8c8c8c" stroke-width="1.2"/></g><g opacity="1"><circle cx="249.3" cy="45.3" r="35.2" fill="#bbbbbb"/><path d="M259.9 45.3L282.8 56.2M259.3 48.6L284.5 45.3M259.7 47.0L280.7 61.3M258.7 50.1L284.1 50.8M259.3 48.6L277.8 66.0M257.8 51.5L282.8 56.2M258.7 50.1L274.2 70.2M256.8 52.8L280.7 61.3M257.8 51.5L270.0 73.8M255.5 53.8L277.8 66.0M256.8 52.8L265.3 76.7M254.1 54.7L274.2 70.2M255.5 53.8L260.2 78.8M252.6 55.3L270.0 73.8M254.1 54.7L254.8 80.1M251.0 55.7L265.3 76.7M252.6 55.3L249.3 80.5M249.3 55.9L260.2 78.8M251.0 55.7L243.8 80.1M247.6 55.7L254.8 80.1M249.3 55.9L238.4 78.8M246.0 55.3L249.3 80.5M247.6 55.7L233.3 76.7M244.5 54.7L243.8 80.1M246.0 55.3L228.6 73.8M243.1 53.8L238.4 78.8M244.5 54.7L224.4 70.2M241.8 52.8L233.3 76.7M243.1 53.8L220.8 66.0M240.8 51.5L228.6 73.8M241.8 52.8L217.9 61.3M239.9 50.1L224.4 70.2M240.8 51.5L215.8 56.2M239.3 48.6L220.8 66.0M239.9 50.1L214.5 50.8M238.9 47.0L217.9 61.3M239.3 48.6L214.1 45.3M238.7 45.3L215.8 56.2M238.9 47.0L214.5 39.8M238.9 43.6L214.5 50.8M238.7 45.3L215.8 34.4M239.3 42.0L214.1 45.3M238.9 43.6L217.9 29.3M239.9 40.5L214.5 39.8M239.3 42.0L220.8 24.6M240.8 39.1L215.8 34.4M239.9 40.5L224.4 20.4M241.8 37.8L217.9 29.3M240.8 39.1L228.6 16.8M243.1 36.8L220.8 24.6M241.8 37.8L233.3 13.9M244.5 35.9L224.4 20.4M243.1 36.8L238.4 11.8M246.0 35.3L228.6 16.8M244.5 35.9L243.8 10.5M247.6 34.9L233.3 13.9M246.0 35.3L249.3 10.1M249.3 34.7L238.4 11.8M247.6 34.9L254.8 10.5M251.0 34.9L243.8 10.5M249.3 34.7L260.2 11.8M252.6 35.3L249.3 10.1M251.0 34.9L265.3 13.9M254.1 35.9L254.8 10.5M252.6 35.3L270.0 16.8M255.5 36.8L260.2 11.8M254.1 35.9L274.2 20.4M256.8 37.8L265.3 13.9M255.5 36.8L277.8 24.6M257.8 39.1L270.0 16.8M256.8 37.8L280.7 29.3M258.7 40.5L274.2 20.4M257.8 39.1L282.8 34.4M259.3 42.0L277.8 24.6M258.7 40.5L284.1 39.8M259.7 43.6L280.7 29.3M259.3 42.0L284.5 45.3M259.9 45.3L282.8 34.4M259.7 43.6L284.1 50.8M259.7 47.0L284.1 39.8" stroke="#8c8c8c" stroke-width="1.2" fill="none"/><circle cx="249.3" cy="45.3" r="10.56" fill="#a2a2a2"/><path d="M249.3 45.3L259.9 45.3M249.3 45.3L259.5 48.0M249.3 45.3L258.4 50.6M249.3 45.3L256.8 52.8M249.3 45.3L254.6 54.4M249.3 45.3L252.0 55.5M249.3 45.3L249.3 55.9M249.3 45.3L246.6 55.5M249.3 45.3L244.0 54.4M249.3 45.3L241.8 52.8M249.3 45.3L240.2 50.6M249.3 45.3L239.1 48.0M249.3 45.3L238.7 45.3M249.3 45.3L239.1 42.6M249.3 45.3L240.2 40.0M249.3 45.3L241.8 37.8M249.3 45.3L244.0 36.2M249.3 45.3L246.6 35.1M249.3 45.3L249.3 34.7M249.3 45.3L252.0 35.1M249.3 45.3L254.6 36.2M249.3 45.3L256.8 37.8M249.3 45.3L258.4 40.0M249.3 45.3L259.5 42.6" stroke="#8c8c8c" stroke-width="0.84" fill="none"/><circle cx="249.3" cy="45.3" r="10.56" fill="none" stroke="#8c8c8c" stroke-width="1.2"/></g><g opacity="1"><circle cx="110" cy="18.7" r="40" fill="#717171"/><path d="M122.0 18.7L148.0 31.1M121.4 22.4L150.0 18.7M121.9 20.6L145.6 36.9M120.7 24.1L149.5 25.0M121.4 22.4L142.4 42.2M119.7 25.8L148.0 31.1M120.7 24.1L138.3 47.0M118.5 27.2L145.6 36.9M119.7 25.8L133.5 51.1M117.1 28.4L142.4 42.2M118.5 27.2L128.2 54.3M115.4 29.4L138.3 47.0M117.1 28.4L122.4 56.7M113.7 30.1L133.5 51.1M115.4 29.4L116.3 58.2M111.9 30.6L128.2 54.3M113.7 30.1L110.0 58.7M110.0 30.7L122.4 56.7M111.9 30.6L103.7 58.2M108.1 30.6L116.3 58.2M110.0 30.7L97.6 56.7M106.3 30.1L110.0 58.7M108.1 30.6L91.8 54.3M104.6 29.4L103.7 58.2M106.3 30.1L86.5 51.1M102.9 28.4L97.6 56.7M104.6 29.4L81.7 47.0M101.5 27.2L91.8 54.3M102.9 28.4L77.6 42.2M100.3 25.8L86.5 51.1M101.5 27.2L74.4 36.9M99.3 24.1L81.7 47.0M100.3 25.8L72.0 31.1M98.6 22.4L77.6 42.2M99.3 24.1L70.5 25.0M98.1 20.6L74.4 36.9M98.6 22.4L70.0 18.7M98.0 18.7L72.0 31.1M98.1 20.6L70.5 12.4M98.1 16.8L70.5 25.0M98.0 18.7L72.0 6.3M98.6 15.0L70.0 18.7M98.1 16.8L74.4 0.5M99.3 13.3L70.5 12.4M98.6 15.0L77.6 -4.8M100.3 11.6L72.0 6.3M99.3 13.3L81.7 -9.6M101.5 10.2L74.4 0.5M100.3 11.6L86.5 -13.7M102.9 9.0L77.6 -4.8M101.5 10.2L91.8 -16.9M104.6 8.0L81.7 -9.6M102.9 9.0L97.6 -19.3M106.3 7.3L86.5 -13.7M104.6 8.0L103.7 -20.8M108.1 6.8L91.8 -16.9M106.3 7.3L110.0 -21.3M110.0 6.7L97.6 -19.3M108.1 6.8L116.3 -20.8M111.9 6.8L103.7 -20.8M110.0 6.7L122.4 -19.3M113.7 7.3L110.0 -21.3M111.9 6.8L128.2 -16.9M115.4 8.0L116.3 -20.8M113.7 7.3L133.5 -13.7M117.1 9.0L122.4 -19.3M115.4 8.0L138.3 -9.6M118.5 10.2L128.2 -16.9M117.1 9.0L142.4 -4.8M119.7 11.6L133.5 -13.7M118.5 10.2L145.6 0.5M120.7 13.3L138.3 -9.6M119.7 11.6L148.0 6.3M121.4 15.0L142.4 -4.8M120.7 13.3L149.5 12.4M121.9 16.8L145.6 0.5M121.4 15.0L150.0 18.7M122.0 18.7L148.0 6.3M121.9 16.8L149.5 25.0M121.9 20.6L149.5 12.4" stroke="#8b8b8b" stroke-width="1.6" fill="none"/><path d="M110.0 18.7L122.0 18.7M110.0 18.7L121.6 21.8M110.0 18.7L120.4 24.7M110.0 18.7L118.5 27.2M110.0 18.7L116.0 29.1M110.0 18.7L113.1 30.3M110.0 18.7L110.0 30.7M110.0 18.7L106.9 30.3M110.0 18.7L104.0 29.1M110.0 18.7L101.5 27.2M110.0 18.7L99.6 24.7M110.0 18.7L98.4 21.8M110.0 18.7L98.0 18.7M110.0 18.7L98.4 15.6M110.0 18.7L99.6 12.7M110.0 18.7L101.5 10.2M110.0 18.7L104.0 8.3M110.0 18.7L106.9 7.1M110.0 18.7L110.0 6.7M110.0 18.7L113.1 7.1M110.0 18.7L116.0 8.3M110.0 18.7L118.5 10.2M110.0 18.7L120.4 12.7M110.0 18.7L121.6 15.6" stroke="#8b8b8b" stroke-width="1.1199999999999999" fill="none"/><circle cx="110" cy="18.7" r="12.0" fill="none" stroke="#8b8b8b" stroke-width="1.6"/></g><g opacity="1"><circle cx="305" cy="18.7" r="40" fill="#717171"/><path d="M317.0 18.7L343.0 31.1M316.4 22.4L345.0 18.7M316.9 20.6L340.6 36.9M315.7 24.1L344.5 25.0M316.4 22.4L337.4 42.2M314.7 25.8L343.0 31.1M315.7 24.1L333.3 47.0M313.5 27.2L340.6 36.9M314.7 25.8L328.5 51.1M312.1 28.4L337.4 42.2M313.5 27.2L323.2 54.3M310.4 29.4L333.3 47.0M312.1 28.4L317.4 56.7M308.7 30.1L328.5 51.1M310.4 29.4L311.3 58.2M306.9 30.6L323.2 54.3M308.7 30.1L305.0 58.7M305.0 30.7L317.4 56.7M306.9 30.6L298.7 58.2M303.1 30.6L311.3 58.2M305.0 30.7L292.6 56.7M301.3 30.1L305.0 58.7M303.1 30.6L286.8 54.3M299.6 29.4L298.7 58.2M301.3 30.1L281.5 51.1M297.9 28.4L292.6 56.7M299.6 29.4L276.7 47.0M296.5 27.2L286.8 54.3M297.9 28.4L272.6 42.2M295.3 25.8L281.5 51.1M296.5 27.2L269.4 36.9M294.3 24.1L276.7 47.0M295.3 25.8L267.0 31.1M293.6 22.4L272.6 42.2M294.3 24.1L265.5 25.0M293.1 20.6L269.4 36.9M293.6 22.4L265.0 18.7M293.0 18.7L267.0 31.1M293.1 20.6L265.5 12.4M293.1 16.8L265.5 25.0M293.0 18.7L267.0 6.3M293.6 15.0L265.0 18.7M293.1 16.8L269.4 0.5M294.3 13.3L265.5 12.4M293.6 15.0L272.6 -4.8M295.3 11.6L267.0 6.3M294.3 13.3L276.7 -9.6M296.5 10.2L269.4 0.5M295.3 11.6L281.5 -13.7M297.9 9.0L272.6 -4.8M296.5 10.2L286.8 -16.9M299.6 8.0L276.7 -9.6M297.9 9.0L292.6 -19.3M301.3 7.3L281.5 -13.7M299.6 8.0L298.7 -20.8M303.1 6.8L286.8 -16.9M301.3 7.3L305.0 -21.3M305.0 6.7L292.6 -19.3M303.1 6.8L311.3 -20.8M306.9 6.8L298.7 -20.8M305.0 6.7L317.4 -19.3M308.7 7.3L305.0 -21.3M306.9 6.8L323.2 -16.9M310.4 8.0L311.3 -20.8M308.7 7.3L328.5 -13.7M312.1 9.0L317.4 -19.3M310.4 8.0L333.3 -9.6M313.5 10.2L323.2 -16.9M312.1 9.0L337.4 -4.8M314.7 11.6L328.5 -13.7M313.5 10.2L340.6 0.5M315.7 13.3L333.3 -9.6M314.7 11.6L343.0 6.3M316.4 15.0L337.4 -4.8M315.7 13.3L344.5 12.4M316.9 16.8L340.6 0.5M316.4 15.0L345.0 18.7M317.0 18.7L343.0 6.3M316.9 16.8L344.5 25.0M316.9 20.6L344.5 12.4" stroke="#8b8b8b" stroke-width="1.6" fill="none"/><path d="M305.0 18.7L317.0 18.7M305.0 18.7L316.6 21.8M305.0 18.7L315.4 24.7M305.0 18.7L313.5 27.2M305.0 18.7L311.0 29.1M305.0 18.7L308.1 30.3M305.0 18.7L305.0 30.7M305.0 18.7L301.9 30.3M305.0 18.7L299.0 29.1M305.0 18.7L296.5 27.2M305.0 18.7L294.6 24.7M305.0 18.7L293.4 21.8M305.0 18.7L293.0 18.7M305.0 18.7L293.4 15.6M305.0 18.7L294.6 12.7M305.0 18.7L296.5 10.2M305.0 18.7L299.0 8.3M305.0 18.7L301.9 7.1M305.0 18.7L305.0 6.7M305.0 18.7L308.1 7.1M305.0 18.7L311.0 8.3M305.0 18.7L313.5 10.2M305.0 18.7L315.4 12.7M305.0 18.7L316.6 15.6" stroke="#8b8b8b" stroke-width="1.1199999999999999" fill="none"/><circle cx="305" cy="18.7" r="12.0" fill="none" stroke="#8b8b8b" stroke-width="1.6"/></g><g opacity="1"><path d="M46.5 155.0L72.5 167.4M45.9 158.7L74.5 155.0M46.4 156.9L70.1 173.2M45.2 160.4L74.0 161.3M45.9 158.7L66.9 178.5M44.2 162.1L72.5 167.4M45.2 160.4L62.8 183.3M43.0 163.5L70.1 173.2M44.2 162.1L58.0 187.4M41.6 164.7L66.9 178.5M43.0 163.5L52.7 190.6M39.9 165.7L62.8 183.3M41.6 164.7L46.9 193.0M38.2 166.4L58.0 187.4M39.9 165.7L40.8 194.5M36.4 166.9L52.7 190.6M38.2 166.4L34.5 195.0M34.5 167.0L46.9 193.0M36.4 166.9L28.2 194.5M32.6 166.9L40.8 194.5M34.5 167.0L22.1 193.0M30.8 166.4L34.5 195.0M32.6 166.9L16.3 190.6M29.1 165.7L28.2 194.5M30.8 166.4L11.0 187.4M27.4 164.7L22.1 193.0M29.1 165.7L6.2 183.3M26.0 163.5L16.3 190.6M27.4 164.7L2.1 178.5M24.8 162.1L11.0 187.4M26.0 163.5L-1.1 173.2M23.8 160.4L6.2 183.3M24.8 162.1L-3.5 167.4M23.1 158.7L2.1 178.5M23.8 160.4L-5.0 161.3M22.6 156.9L-1.1 173.2M23.1 158.7L-5.5 155.0M22.5 155.0L-3.5 167.4M22.6 156.9L-5.0 148.7M22.6 153.1L-5.0 161.3M22.5 155.0L-3.5 142.6M23.1 151.3L-5.5 155.0M22.6 153.1L-1.1 136.8M23.8 149.6L-5.0 148.7M23.1 151.3L2.1 131.5M24.8 147.9L-3.5 142.6M23.8 149.6L6.2 126.7M26.0 146.5L-1.1 136.8M24.8 147.9L11.0 122.6M27.4 145.3L2.1 131.5M26.0 146.5L16.3 119.4M29.1 144.3L6.2 126.7M27.4 145.3L22.1 117.0M30.8 143.6L11.0 122.6M29.1 144.3L28.2 115.5M32.6 143.1L16.3 119.4M30.8 143.6L34.5 115.0M34.5 143.0L22.1 117.0M32.6 143.1L40.8 115.5M36.4 143.1L28.2 115.5M34.5 143.0L46.9 117.0M38.2 143.6L34.5 115.0M36.4 143.1L52.7 119.4M39.9 144.3L40.8 115.5M38.2 143.6L58.0 122.6M41.6 145.3L46.9 117.0M39.9 144.3L62.8 126.7M43.0 146.5L52.7 119.4M41.6 145.3L66.9 131.5M44.2 147.9L58.0 122.6M43.0 146.5L70.1 136.8M45.2 149.6L62.8 126.7M44.2 147.9L72.5 142.6M45.9 151.3L66.9 131.5M45.2 149.6L74.0 148.7M46.4 153.1L70.1 136.8M45.9 151.3L74.5 155.0M46.5 155.0L72.5 142.6M46.4 153.1L74.0 161.3M46.4 156.9L74.0 148.7" stroke="#868686" stroke-width="1.6" fill="none"/><path d="M34.5 155.0L46.5 155.0M34.5 155.0L46.1 158.1M34.5 155.0L44.9 161.0M34.5 155.0L43.0 163.5M34.5 155.0L40.5 165.4M34.5 155.0L37.6 166.6M34.5 155.0L34.5 167.0M34.5 155.0L31.4 166.6M34.5 155.0L28.5 165.4M34.5 155.0L26.0 163.5M34.5 155.0L24.1 161.0M34.5 155.0L22.9 158.1M34.5 155.0L22.5 155.0M34.5 155.0L22.9 151.9M34.5 155.0L24.1 149.0M34.5 155.0L26.0 146.5M34.5 155.0L28.5 144.6M34.5 155.0L31.4 143.4M34.5 155.0L34.5 143.0M34.5 155.0L37.6 143.4M34.5 155.0L40.5 144.6M34.5 155.0L43.0 146.5M34.5 155.0L44.9 149.0M34.5 155.0L46.1 151.9" stroke="#868686" stroke-width="1.1199999999999999" fill="none"/><circle cx="34.5" cy="155" r="12.0" fill="none" stroke="#868686" stroke-width="1.6"/></g><g opacity="1"><path d="M242.0 155.0L268.0 167.4M241.4 158.7L270.0 155.0M241.9 156.9L265.6 173.2M240.7 160.4L269.5 161.3M241.4 158.7L262.4 178.5M239.7 162.1L268.0 167.4M240.7 160.4L258.3 183.3M238.5 163.5L265.6 173.2M239.7 162.1L253.5 187.4M237.1 164.7L262.4 178.5M238.5 163.5L248.2 190.6M235.4 165.7L258.3 183.3M237.1 164.7L242.4 193.0M233.7 166.4L253.5 187.4M235.4 165.7L236.3 194.5M231.9 166.9L248.2 190.6M233.7 166.4L230.0 195.0M230.0 167.0L242.4 193.0M231.9 166.9L223.7 194.5M228.1 166.9L236.3 194.5M230.0 167.0L217.6 193.0M226.3 166.4L230.0 195.0M228.1 166.9L211.8 190.6M224.6 165.7L223.7 194.5M226.3 166.4L206.5 187.4M222.9 164.7L217.6 193.0M224.6 165.7L201.7 183.3M221.5 163.5L211.8 190.6M222.9 164.7L197.6 178.5M220.3 162.1L206.5 187.4M221.5 163.5L194.4 173.2M219.3 160.4L201.7 183.3M220.3 162.1L192.0 167.4M218.6 158.7L197.6 178.5M219.3 160.4L190.5 161.3M218.1 156.9L194.4 173.2M218.6 158.7L190.0 155.0M218.0 155.0L192.0 167.4M218.1 156.9L190.5 148.7M218.1 153.1L190.5 161.3M218.0 155.0L192.0 142.6M218.6 151.3L190.0 155.0M218.1 153.1L194.4 136.8M219.3 149.6L190.5 148.7M218.6 151.3L197.6 131.5M220.3 147.9L192.0 142.6M219.3 149.6L201.7 126.7M221.5 146.5L194.4 136.8M220.3 147.9L206.5 122.6M222.9 145.3L197.6 131.5M221.5 146.5L211.8 119.4M224.6 144.3L201.7 126.7M222.9 145.3L217.6 117.0M226.3 143.6L206.5 122.6M224.6 144.3L223.7 115.5M228.1 143.1L211.8 119.4M226.3 143.6L230.0 115.0M230.0 143.0L217.6 117.0M228.1 143.1L236.3 115.5M231.9 143.1L223.7 115.5M230.0 143.0L242.4 117.0M233.7 143.6L230.0 115.0M231.9 143.1L248.2 119.4M235.4 144.3L236.3 115.5M233.7 143.6L253.5 122.6M237.1 145.3L242.4 117.0M235.4 144.3L258.3 126.7M238.5 146.5L248.2 119.4M237.1 145.3L262.4 131.5M239.7 147.9L253.5 122.6M238.5 146.5L265.6 136.8M240.7 149.6L258.3 126.7M239.7 147.9L268.0 142.6M241.4 151.3L262.4 131.5M240.7 149.6L269.5 148.7M241.9 153.1L265.6 136.8M241.4 151.3L270.0 155.0M242.0 155.0L268.0 142.6M241.9 153.1L269.5 161.3M241.9 156.9L269.5 148.7" stroke="#868686" stroke-width="1.6" fill="none"/><path d="M230.0 155.0L242.0 155.0M230.0 155.0L241.6 158.1M230.0 155.0L240.4 161.0M230.0 155.0L238.5 163.5M230.0 155.0L236.0 165.4M230.0 155.0L233.1 166.6M230.0 155.0L230.0 167.0M230.0 155.0L226.9 166.6M230.0 155.0L224.0 165.4M230.0 155.0L221.5 163.5M230.0 155.0L219.6 161.0M230.0 155.0L218.4 158.1M230.0 155.0L218.0 155.0M230.0 155.0L218.4 151.9M230.0 155.0L219.6 149.0M230.0 155.0L221.5 146.5M230.0 155.0L224.0 144.6M230.0 155.0L226.9 143.4M230.0 155.0L230.0 143.0M230.0 155.0L233.1 143.4M230.0 155.0L236.0 144.6M230.0 155.0L238.5 146.5M230.0 155.0L240.4 149.0M230.0 155.0L241.6 151.9" stroke="#868686" stroke-width="1.1199999999999999" fill="none"/><circle cx="230" cy="155" r="12.0" fill="none" stroke="#868686" stroke-width="1.6"/></g><g opacity="1"><circle cx="151.6" cy="135" r="25" fill="#b8b8b8"/><path d="M159.1 135.0L174.7 144.6M158.5 137.9L176.6 135.0M159.0 136.5L172.4 148.9M157.8 139.2L176.1 139.9M158.5 137.9L169.3 152.7M156.9 140.3L174.7 144.6M157.8 139.2L165.5 155.8M155.8 141.2L172.4 148.9M156.9 140.3L161.2 158.1M154.5 141.9L169.3 152.7M155.8 141.2L156.5 159.5M153.1 142.4L165.5 155.8M154.5 141.9L151.6 160.0M151.6 142.5L161.2 158.1M153.1 142.4L146.7 159.5M150.1 142.4L156.5 159.5M151.6 142.5L142.0 158.1M148.7 141.9L151.6 160.0M150.1 142.4L137.7 155.8M147.4 141.2L146.7 159.5M148.7 141.9L133.9 152.7M146.3 140.3L142.0 158.1M147.4 141.2L130.8 148.9M145.4 139.2L137.7 155.8M146.3 140.3L128.5 144.6M144.7 137.9L133.9 152.7M145.4 139.2L127.1 139.9M144.2 136.5L130.8 148.9M144.7 137.9L126.6 135.0M144.1 135.0L128.5 144.6M144.2 136.5L127.1 130.1M144.2 133.5L127.1 139.9M144.1 135.0L128.5 125.4M144.7 132.1L126.6 135.0M144.2 133.5L130.8 121.1M145.4 130.8L127.1 130.1M144.7 132.1L133.9 117.3M146.3 129.7L128.5 125.4M145.4 130.8L137.7 114.2M147.4 128.8L130.8 121.1M146.3 129.7L142.0 111.9M148.7 128.1L133.9 117.3M147.4 128.8L146.7 110.5M150.1 127.6L137.7 114.2M148.7 128.1L151.6 110.0M151.6 127.5L142.0 111.9M150.1 127.6L156.5 110.5M153.1 127.6L146.7 110.5M151.6 127.5L161.2 111.9M154.5 128.1L151.6 110.0M153.1 127.6L165.5 114.2M155.8 128.8L156.5 110.5M154.5 128.1L169.3 117.3M156.9 129.7L161.2 111.9M155.8 128.8L172.4 121.1M157.8 130.8L165.5 114.2M156.9 129.7L174.7 125.4M158.5 132.1L169.3 117.3M157.8 130.8L176.1 130.1M159.0 133.5L172.4 121.1M158.5 132.1L176.6 135.0M159.1 135.0L174.7 125.4M159.0 133.5L176.1 139.9M159.0 136.5L176.1 130.1" stroke="#8c8c8c" stroke-width="1.0" fill="none"/><circle cx="151.6" cy="135" r="7.5" fill="#a2a2a2"/><path d="M151.6 135.0L159.1 135.0M151.6 135.0L158.8 136.9M151.6 135.0L158.1 138.8M151.6 135.0L156.9 140.3M151.6 135.0L155.3 141.5M151.6 135.0L153.5 142.2M151.6 135.0L151.6 142.5M151.6 135.0L149.7 142.2M151.6 135.0L147.8 141.5M151.6 135.0L146.3 140.3M151.6 135.0L145.1 138.8M151.6 135.0L144.4 136.9M151.6 135.0L144.1 135.0M151.6 135.0L144.4 133.1M151.6 135.0L145.1 131.2M151.6 135.0L146.3 129.7M151.6 135.0L147.8 128.5M151.6 135.0L149.7 127.8M151.6 135.0L151.6 127.5M151.6 135.0L153.5 127.8M151.6 135.0L155.3 128.5M151.6 135.0L156.9 129.7M151.6 135.0L158.1 131.2M151.6 135.0L158.8 133.1" stroke="#8c8c8c" stroke-width="0.7" fill="none"/><circle cx="151.6" cy="135" r="7.5" fill="none" stroke="#8c8c8c" stroke-width="1.0"/></g></svg></div><div class="plus" style="border-color:#f4f4f4"></div><div class="lab">Tapete 50529</div></div>
<div class="card" style="left:628.8px;top:652.8px"><div class="img"><svg width="278" height="142" viewBox="0 0 278 142"><rect width="278" height="142" fill="#d9d8d0"/></svg></div><div class="plus"></div><div class="lab">Tapete 50531</div></div>
<div class="card" style="left:929.2px;top:652.8px"><div class="img"><svg width="278" height="142" viewBox="0 0 278 142"><rect width="278" height="142" fill="#dadad9"/></svg></div><div class="plus"></div><div class="lab">Tapete 50527</div></div>
<div class="card" style="left:1229.6px;top:652.8px"><div class="img"><svg width="278" height="142" viewBox="0 0 278 142"><rect width="278" height="142" fill="#ededec"/></svg></div><div class="plus"></div><div class="lab">Tapete 50525</div></div>
</div>

<div class="abs" style="left:1862px;top:973px;width:48px;height:48px;border-radius:50%;background:#131313;box-shadow:0 2px 6px rgba(0,0,0,0.25)"></div>
<svg class="abs" style="left:1866px;top:980px" width="40" height="34" viewBox="0 0 40 34"><path d="M18.4 22 H13.8 A5 5 0 0 1 13.8 12 H26.2" fill="none" stroke="#fff" stroke-width="2.1" stroke-linecap="round"/><circle cx="26.2" cy="17" r="5" fill="none" stroke="#fff" stroke-width="2.1"/></svg>
</body></html>
